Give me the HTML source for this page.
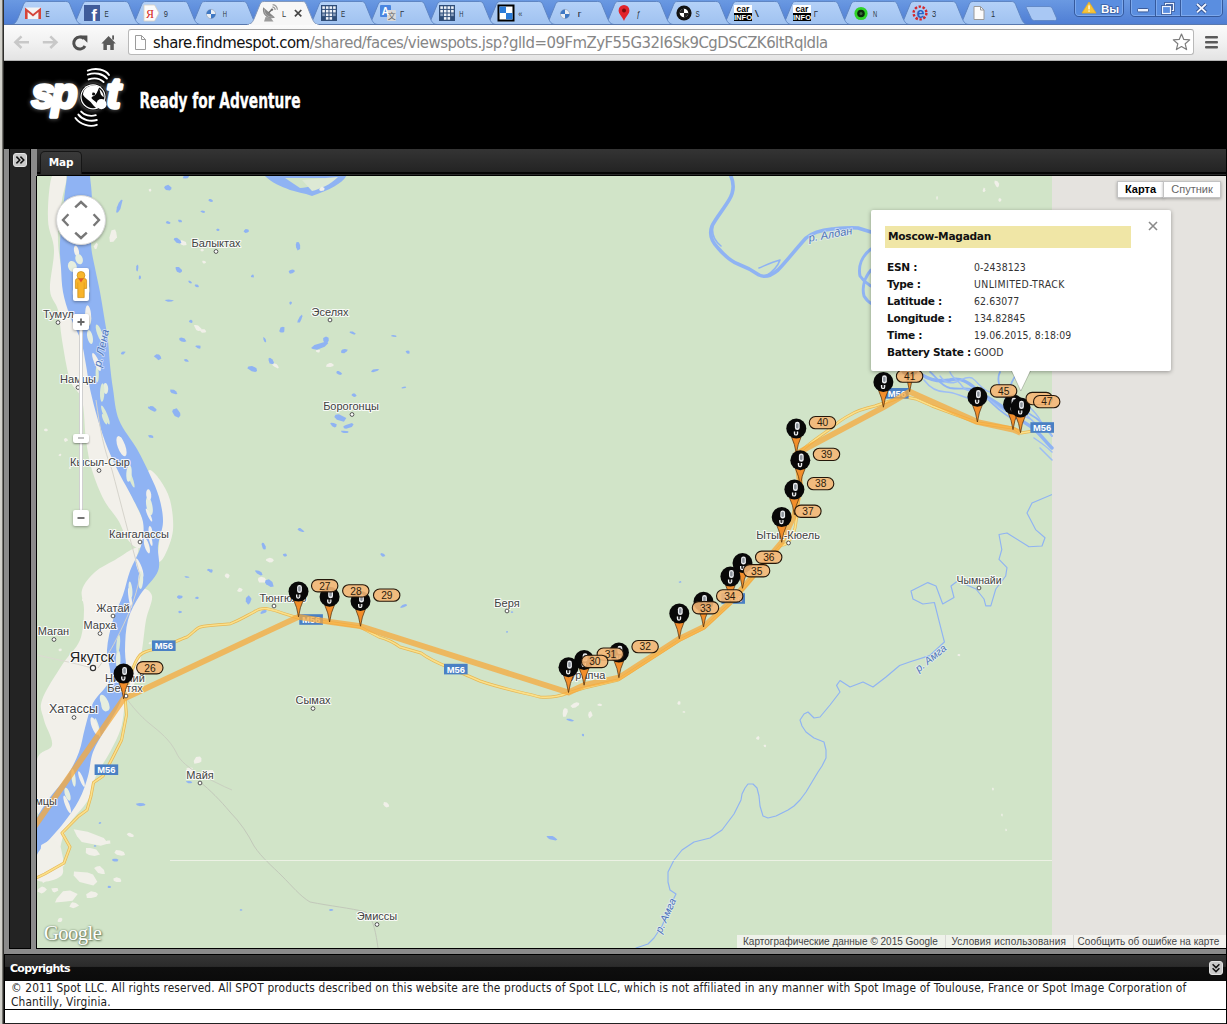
<!DOCTYPE html>
<html lang="ru">
<head>
<meta charset="utf-8">
<title>SPOT Shared Page</title>
<style>
html,body{margin:0;padding:0;}
body{width:1227px;height:1024px;overflow:hidden;position:relative;background:#000;font-family:"Liberation Sans","DejaVu Sans",sans-serif;}
.abs{position:absolute;}
#winl{left:0;top:0;width:3px;height:1024px;background:linear-gradient(90deg,#d4d3cd 0,#d0cfc9 66%,#75746f 67%,#75746f 100%);}
#winl2{left:3px;top:0;width:1px;height:1024px;background:#2e2e2c;}
/* ---------- browser chrome ---------- */
#tabstrip{left:4px;top:0;width:1223px;height:24px;background:linear-gradient(#6a99e2,#4f7ed4);}
#toolbar{left:4px;top:24px;width:1223px;height:37px;background:linear-gradient(#fbfbfb 0%,#f1f1f1 50%,#e3e3e3 100%);border-top:1px solid #5d7eb5;box-sizing:border-box;}
#toolbar .line{left:0;bottom:0;width:100%;height:1px;background:#b4b4b4;}
#urlbox{left:128px;top:29px;width:1066px;height:26px;box-sizing:border-box;background:#fff;border:1px solid #b9b9b9;border-top-color:#a3a3a3;border-radius:3px;}
#url{left:153px;top:32px;height:22px;line-height:22px;font-size:16.6px;color:#868686;white-space:nowrap;font-family:"DejaVu Sans Condensed","Liberation Sans",sans-serif;letter-spacing:-0.52px;}
#url b{font-weight:normal;color:#111;}
/* ---------- page ---------- */
#hdr{left:4px;top:61px;width:1223px;height:88px;background:#000;}
#frame{left:4px;top:149px;width:1223px;height:805px;background:#8b8b8b;}
#side{left:9px;top:149px;width:22px;height:800px;background:#232323;border:1px solid #000;border-top:none;box-sizing:border-box;}
#mapborder{left:36px;top:176px;width:1191px;height:773px;background:#000;}
#sidebtn{left:13px;top:153px;width:14px;height:14px;border-radius:3px;background:#c9c9c9;border:1px solid #e2e2e2;box-sizing:border-box;}
#tabbar{left:37px;top:149px;width:1190px;height:27px;background:linear-gradient(#343434 0,#232323 86%,#050505 87%,#050505 92%,#2a2a2a 93%,#2a2a2a 97%,#000 98%);}
#maptab{left:40px;top:151px;width:42px;height:23px;background:linear-gradient(#3a3a3a,#2d2d2d);border-radius:5px 5px 0 0;border:1px solid #161616;border-bottom:none;box-sizing:border-box;color:#fff;font:bold 10.5px/21px "DejaVu Sans","Liberation Sans",sans-serif;text-align:center;letter-spacing:-0.2px;}
#map{left:37px;top:176px;width:1189px;height:772px;background:#e5e3df;overflow:hidden;}
#map svg{position:absolute;left:0;top:0;}
/* copyright */
#cbar{left:4px;top:954px;width:1223px;height:27px;background:linear-gradient(#000 0,#000 4%,#353535 5%,#2b2b2b 46%,#0e0e0e 50%,#0b0b0b 100%);border-left:1px solid #000;box-sizing:border-box;}
#cbar span{position:absolute;left:5px;top:7.5px;color:#fff;font:bold 11px/14px "DejaVu Sans","Liberation Sans",sans-serif;letter-spacing:-0.75px;}
#cpanel{left:4px;top:981px;width:1223px;height:29px;background:#fff;border-left:1px solid #000;border-bottom:1px solid #000;box-sizing:border-box;}
#ctext{left:11px;top:981px;width:1200px;font-size:11.8px;letter-spacing:0.15px;line-height:14px;color:#222;font-family:"DejaVu Sans Condensed","Liberation Sans",sans-serif;white-space:nowrap;}
#cbot{left:4px;top:1010px;width:1223px;height:13px;background:#fff;border-left:1px solid #000;box-sizing:border-box;}
#cbot2{left:4px;top:1023px;width:1223px;height:1px;background:#222;}
#cbtn{left:1209px;top:961px;width:14px;height:14px;border-radius:3px;background:#c9c9c9;border:1px solid #e2e2e2;box-sizing:border-box;}
.iwl{left:887px;font:bold 10.6px/14px "DejaVu Sans","Liberation Sans",sans-serif;color:#111;letter-spacing:-0.3px;white-space:nowrap;}
.iwv{left:974px;font:10.4px/14px "DejaVu Sans Condensed","Liberation Sans",sans-serif;color:#333;white-space:nowrap;letter-spacing:0.1px;}
</style>
</head>
<body>
<div id="winr" class="abs" style="left:1226px;top:61px;width:1px;height:963px;background:#000;z-index:50;"></div>
<div id="winl" class="abs"></div><div id="winl2" class="abs"></div>
<!--CHROME-->
<div id="tabstrip" class="abs"></div>
<div id="toolbar" class="abs"><div class="line abs"></div></div>
<div id="urlbox" class="abs"></div>
<div id="url" class="abs"><b>share.findmespot.com</b>/shared/faces/viewspots.jsp?glId=09FmZyF55G32I6Sk9CgDSCZK6ltRqldla</div>
<svg class="abs" style="left:0;top:0" width="1227" height="25" viewBox="0 0 1227 25">
<defs><linearGradient id="tg" x1="0" y1="0" x2="0" y2="1"><stop offset="0" stop-color="#b4d1f8"/><stop offset="1" stop-color="#a0c2f0"/></linearGradient></defs>
<path d="M956.6 24.5 C960.6 24.5 962.1 21.5 963.6 18 L969.1 4.5 C970.1 2 971.1 1.5 973.6 1.5 L1011.1 1.5 C1013.6 1.5 1014.6 2 1015.6 4.5 L1021.1 18 C1022.6 21.5 1024.1 24.5 1028.1 24.5 Z" fill="url(#tg)" stroke="#5f86c4" stroke-width="1"/>
<path d="M897.5 24.5 C901.5 24.5 903.0 21.5 904.5 18 L910.0 4.5 C911.0 2 912.0 1.5 914.5 1.5 L952.0 1.5 C954.5 1.5 955.5 2 956.5 4.5 L962.0 18 C963.5 21.5 965.0 24.5 969.0 24.5 Z" fill="url(#tg)" stroke="#5f86c4" stroke-width="1"/>
<path d="M838.4 24.5 C842.4 24.5 843.9 21.5 845.4 18 L850.9 4.5 C851.9 2 852.9 1.5 855.4 1.5 L892.9 1.5 C895.4 1.5 896.4 2 897.4 4.5 L902.9 18 C904.4 21.5 905.9 24.5 909.9 24.5 Z" fill="url(#tg)" stroke="#5f86c4" stroke-width="1"/>
<path d="M779.3 24.5 C783.3 24.5 784.8 21.5 786.3 18 L791.8 4.5 C792.8 2 793.8 1.5 796.3 1.5 L833.8 1.5 C836.3 1.5 837.3 2 838.3 4.5 L843.8 18 C845.3 21.5 846.8 24.5 850.8 24.5 Z" fill="url(#tg)" stroke="#5f86c4" stroke-width="1"/>
<path d="M720.2 24.5 C724.2 24.5 725.7 21.5 727.2 18 L732.7 4.5 C733.7 2 734.7 1.5 737.2 1.5 L774.7 1.5 C777.2 1.5 778.2 2 779.2 4.5 L784.7 18 C786.2 21.5 787.7 24.5 791.7 24.5 Z" fill="url(#tg)" stroke="#5f86c4" stroke-width="1"/>
<path d="M661.1 24.5 C665.1 24.5 666.6 21.5 668.1 18 L673.6 4.5 C674.6 2 675.6 1.5 678.1 1.5 L715.6 1.5 C718.1 1.5 719.1 2 720.1 4.5 L725.6 18 C727.1 21.5 728.6 24.5 732.6 24.5 Z" fill="url(#tg)" stroke="#5f86c4" stroke-width="1"/>
<path d="M602.0 24.5 C606.0 24.5 607.5 21.5 609.0 18 L614.5 4.5 C615.5 2 616.5 1.5 619.0 1.5 L656.5 1.5 C659.0 1.5 660.0 2 661.0 4.5 L666.5 18 C668.0 21.5 669.5 24.5 673.5 24.5 Z" fill="url(#tg)" stroke="#5f86c4" stroke-width="1"/>
<path d="M542.9 24.5 C546.9 24.5 548.4 21.5 549.9 18 L555.4 4.5 C556.4 2 557.4 1.5 559.9 1.5 L597.4 1.5 C599.9 1.5 600.9 2 601.9 4.5 L607.4 18 C608.9 21.5 610.4 24.5 614.4 24.5 Z" fill="url(#tg)" stroke="#5f86c4" stroke-width="1"/>
<path d="M483.8 24.5 C487.8 24.5 489.3 21.5 490.8 18 L496.3 4.5 C497.3 2 498.3 1.5 500.8 1.5 L538.3 1.5 C540.8 1.5 541.8 2 542.8 4.5 L548.3 18 C549.8 21.5 551.3 24.5 555.3 24.5 Z" fill="url(#tg)" stroke="#5f86c4" stroke-width="1"/>
<path d="M424.7 24.5 C428.7 24.5 430.2 21.5 431.7 18 L437.2 4.5 C438.2 2 439.2 1.5 441.7 1.5 L479.2 1.5 C481.7 1.5 482.7 2 483.7 4.5 L489.2 18 C490.7 21.5 492.2 24.5 496.2 24.5 Z" fill="url(#tg)" stroke="#5f86c4" stroke-width="1"/>
<path d="M365.6 24.5 C369.6 24.5 371.1 21.5 372.6 18 L378.1 4.5 C379.1 2 380.1 1.5 382.6 1.5 L420.1 1.5 C422.6 1.5 423.6 2 424.6 4.5 L430.1 18 C431.6 21.5 433.1 24.5 437.1 24.5 Z" fill="url(#tg)" stroke="#5f86c4" stroke-width="1"/>
<path d="M306.5 24.5 C310.5 24.5 312.0 21.5 313.5 18 L319.0 4.5 C320.0 2 321.0 1.5 323.5 1.5 L361.0 1.5 C363.5 1.5 364.5 2 365.5 4.5 L371.0 18 C372.5 21.5 374.0 24.5 378.0 24.5 Z" fill="url(#tg)" stroke="#5f86c4" stroke-width="1"/>
<path d="M188.3 24.5 C192.3 24.5 193.8 21.5 195.3 18 L200.8 4.5 C201.8 2 202.8 1.5 205.3 1.5 L242.8 1.5 C245.3 1.5 246.3 2 247.3 4.5 L252.8 18 C254.3 21.5 255.8 24.5 259.8 24.5 Z" fill="url(#tg)" stroke="#5f86c4" stroke-width="1"/>
<path d="M129.2 24.5 C133.2 24.5 134.7 21.5 136.2 18 L141.7 4.5 C142.7 2 143.7 1.5 146.2 1.5 L183.7 1.5 C186.2 1.5 187.2 2 188.2 4.5 L193.7 18 C195.2 21.5 196.7 24.5 200.7 24.5 Z" fill="url(#tg)" stroke="#5f86c4" stroke-width="1"/>
<path d="M70.1 24.5 C74.1 24.5 75.6 21.5 77.1 18 L82.6 4.5 C83.6 2 84.6 1.5 87.1 1.5 L124.6 1.5 C127.1 1.5 128.1 2 129.1 4.5 L134.6 18 C136.1 21.5 137.6 24.5 141.6 24.5 Z" fill="url(#tg)" stroke="#5f86c4" stroke-width="1"/>
<path d="M11.0 24.5 C15.0 24.5 16.5 21.5 18.0 18 L23.5 4.5 C24.5 2 25.5 1.5 28.0 1.5 L65.5 1.5 C68.0 1.5 69.0 2 70.0 4.5 L75.5 18 C77.0 21.5 78.5 24.5 82.5 24.5 Z" fill="url(#tg)" stroke="#5f86c4" stroke-width="1"/>
<path d="M1027 6.5 H1049 C1051 6.5 1052 7.5 1052.6 9 L1056.5 18 C1057 19.6 1056.4 20.5 1054.6 20.5 H1034.5 C1032.5 20.5 1031.6 19.6 1031 18 L1026.6 8.6 C1026 7.2 1026.2 6.5 1027 6.5 Z" fill="#a9c8f4" stroke="#5f86c4" stroke-width="0.9"/>
<rect x="4" y="24" width="1223" height="1" fill="#5878ae"/>
<path d="M247.4 24.5 C251.4 24.5 252.9 21.5 254.4 18 L259.9 4.5 C260.9 2 261.9 1.5 264.4 1.5 L301.9 1.5 C304.4 1.5 305.4 2 306.4 4.5 L311.9 18 C313.4 21.5 314.9 24.5 318.9 24.5 Z" fill="#f7f7f7" stroke="#8298bc" stroke-width="1"/>
<rect x="248.9" y="24" width="68.5" height="1.2" fill="#f7f7f7"/>
<rect x="25" y="7.5" width="16" height="11.5" fill="#f4f4f4"/><path d="M25 19 V7.5 L33 14 L41 7.5 V19 H38.4 V12 L33 16.6 L27.6 12 V19 Z" fill="#d5453a"/>
<text x="45.5" y="16.6" font-size="9.6" fill="#1a1f2a" fill-opacity="0.92" font-family="Liberation Sans, sans-serif" textLength="4.2" lengthAdjust="spacingAndGlyphs">Е</text>
<rect x="84" y="5" width="16" height="16" fill="#3f5c9a"/><text x="94.2" y="21" text-anchor="middle" font-size="17" font-weight="bold" fill="#fff" font-family="Liberation Sans, sans-serif">f</text>
<text x="104.6" y="16.6" font-size="9.6" fill="#1a1f2a" fill-opacity="0.92" font-family="Liberation Sans, sans-serif" textLength="4.2" lengthAdjust="spacingAndGlyphs">Е</text>
<path d="M144 5 H154.5 L159 13 L154.5 21 H144 Z" fill="#fbfbfb" stroke="#d9d2c4" stroke-width="0.8"/><text x="150" y="17.6" text-anchor="middle" font-size="12" fill="#d6261c" font-family="Liberation Serif, serif">Я</text>
<text x="163.7" y="16.6" font-size="9.6" fill="#1a1f2a" fill-opacity="0.92" font-family="Liberation Sans, sans-serif" textLength="4.2" lengthAdjust="spacingAndGlyphs">9</text>
<circle cx="211" cy="14" r="4.6" fill="#e9eef5" stroke="#9aa9c0" stroke-width="0.8"/><path d="M211 14 V9.4 A4.6 4.6 0 0 0 206.4 14 Z M211 14 V18.6 A4.6 4.6 0 0 0 215.6 14 Z" fill="#3f78c4"/>
<text x="222.8" y="16.6" font-size="9.6" fill="#1a1f2a" fill-opacity="0.92" font-family="Liberation Sans, sans-serif" textLength="4.2" lengthAdjust="spacingAndGlyphs">Н</text>
<path d="M265.5 17 L264 21.6 H273.5 L270.5 17.5 Z" fill="#9c9c9c"/><path d="M263.2 7.2 C261.4 14.5 267.5 20 275 17.6 Z" fill="#878787"/><path d="M264.6 9.5 C264 14 268 17.6 272.6 17" fill="none" stroke="#b4b4b4" stroke-width="0.9"/><path d="M268.6 12.8 L271.8 9.8" stroke="#6f6f6f" stroke-width="1.5"/><circle cx="272" cy="9.6" r="1.2" fill="#6f6f6f"/><path d="M272.4 6.9 A3.4 3.4 0 0 1 275.2 10 M272.6 4.7 A5.6 5.6 0 0 1 277.4 9.8" fill="none" stroke="#9a9a9a" stroke-width="1.2"/>
<text x="281.9" y="16.6" font-size="9.6" fill="#1a1f2a" fill-opacity="0.92" font-family="Liberation Sans, sans-serif" textLength="4.2" lengthAdjust="spacingAndGlyphs">L</text>
<rect x="321" y="5" width="16" height="16" fill="#2f4d78"/><rect x="322.3" y="6.3" width="2.6" height="2.6" fill="#eef2f8"/><rect x="325.9" y="6.3" width="2.6" height="2.6" fill="#eef2f8"/><rect x="329.5" y="6.3" width="2.6" height="2.6" fill="#eef2f8"/><rect x="333.1" y="6.3" width="2.6" height="2.6" fill="#eef2f8"/><rect x="322.3" y="9.9" width="2.6" height="2.6" fill="#eef2f8"/><rect x="325.9" y="9.9" width="2.6" height="2.6" fill="#eef2f8"/><rect x="329.5" y="9.9" width="2.6" height="2.6" fill="#eef2f8"/><rect x="333.1" y="9.9" width="2.6" height="2.6" fill="#eef2f8"/><rect x="322.3" y="13.5" width="2.6" height="2.6" fill="#8aa0bf"/><rect x="325.9" y="13.5" width="2.6" height="2.6" fill="#eef2f8"/><rect x="329.5" y="13.5" width="2.6" height="2.6" fill="#eef2f8"/><rect x="333.1" y="13.5" width="2.6" height="2.6" fill="#8aa0bf"/><rect x="325.9" y="17.1" width="2.6" height="2.6" fill="#eef2f8"/><rect x="329.5" y="17.1" width="2.6" height="2.6" fill="#eef2f8"/>
<text x="341.0" y="16.6" font-size="9.6" fill="#1a1f2a" fill-opacity="0.92" font-family="Liberation Sans, sans-serif" textLength="4.2" lengthAdjust="spacingAndGlyphs">Е</text>
<rect x="380" y="5" width="11" height="12" rx="1" fill="#4a86e0"/><rect x="387" y="10" width="9" height="11" rx="1" fill="#d8d8d8"/><text x="385.3" y="15" text-anchor="middle" font-size="10" font-weight="bold" fill="#fff" font-family="Liberation Sans, sans-serif">A</text><text x="391.8" y="19.4" text-anchor="middle" font-size="8" fill="#666" font-family="Liberation Sans, Noto Sans CJK SC, sans-serif">文</text>
<text x="400.1" y="16.6" font-size="9.6" fill="#1a1f2a" fill-opacity="0.92" font-family="Liberation Sans, sans-serif" textLength="4.2" lengthAdjust="spacingAndGlyphs">Г</text>
<rect x="439" y="5" width="16" height="16" fill="#2f4d78"/><rect x="440.3" y="6.3" width="2.6" height="2.6" fill="#eef2f8"/><rect x="443.9" y="6.3" width="2.6" height="2.6" fill="#eef2f8"/><rect x="447.5" y="6.3" width="2.6" height="2.6" fill="#eef2f8"/><rect x="451.1" y="6.3" width="2.6" height="2.6" fill="#eef2f8"/><rect x="440.3" y="9.9" width="2.6" height="2.6" fill="#eef2f8"/><rect x="443.9" y="9.9" width="2.6" height="2.6" fill="#eef2f8"/><rect x="447.5" y="9.9" width="2.6" height="2.6" fill="#eef2f8"/><rect x="451.1" y="9.9" width="2.6" height="2.6" fill="#eef2f8"/><rect x="440.3" y="13.5" width="2.6" height="2.6" fill="#8aa0bf"/><rect x="443.9" y="13.5" width="2.6" height="2.6" fill="#eef2f8"/><rect x="447.5" y="13.5" width="2.6" height="2.6" fill="#eef2f8"/><rect x="451.1" y="13.5" width="2.6" height="2.6" fill="#8aa0bf"/><rect x="443.9" y="17.1" width="2.6" height="2.6" fill="#eef2f8"/><rect x="447.5" y="17.1" width="2.6" height="2.6" fill="#eef2f8"/>
<text x="459.2" y="16.6" font-size="9.6" fill="#1a1f2a" fill-opacity="0.92" font-family="Liberation Sans, sans-serif" textLength="4.2" lengthAdjust="spacingAndGlyphs">Н</text>
<rect x="498.5" y="5.5" width="15" height="15" fill="#fff" stroke="#000" stroke-width="2"/><rect x="499.5" y="6.5" width="6.5" height="6.5" fill="#2a7bd8"/><rect x="506" y="13" width="6.5" height="6.5" fill="#2a7bd8"/>
<text x="518.3" y="16.6" font-size="9.6" fill="#1a1f2a" fill-opacity="0.92" font-family="Liberation Sans, sans-serif" textLength="4.2" lengthAdjust="spacingAndGlyphs">«</text>
<circle cx="565" cy="14" r="4.6" fill="#e9eef5" stroke="#9aa9c0" stroke-width="0.8"/><path d="M565 14 V9.4 A4.6 4.6 0 0 0 560.4 14 Z M565 14 V18.6 A4.6 4.6 0 0 0 569.6 14 Z" fill="#3f78c4"/>
<text x="577.4" y="16.6" font-size="9.6" fill="#1a1f2a" fill-opacity="0.92" font-family="Liberation Sans, sans-serif" textLength="4.2" lengthAdjust="spacingAndGlyphs">г</text>
<path d="M624 21 C622 16 618.6 14 618.6 10.4 A5.4 5.4 0 0 1 629.4 10.4 C629.4 14 626 16 624 21 Z" fill="#e1232b"/><circle cx="624" cy="10.4" r="2" fill="#7a0d10"/>
<text x="636.5" y="16.6" font-size="9.6" fill="#1a1f2a" fill-opacity="0.92" font-family="Liberation Sans, sans-serif" textLength="4.2" lengthAdjust="spacingAndGlyphs">ƒ</text>
<circle cx="684" cy="13" r="7.6" fill="#111"/><circle cx="684" cy="13" r="4.3" fill="#fff"/><path d="M684 13 V8.7 A4.3 4.3 0 0 0 679.7 13 Z M684 13 V17.3 A4.3 4.3 0 0 0 688.3 13 Z" fill="#222"/>
<text x="695.6" y="16.6" font-size="9.6" fill="#1a1f2a" fill-opacity="0.92" font-family="Liberation Sans, sans-serif" textLength="4.2" lengthAdjust="spacingAndGlyphs">S</text>
<rect x="734" y="5" width="18" height="8" fill="#fff"/><rect x="734" y="13" width="18" height="8" fill="#000"/><text x="743" y="11.6" text-anchor="middle" font-size="8.5" font-weight="bold" fill="#000" font-family="Liberation Sans, sans-serif">car</text><text x="743" y="20" text-anchor="middle" font-size="7.6" font-weight="bold" fill="#fff" font-family="Liberation Sans, sans-serif">INFO</text>
<text x="754.7" y="16.6" font-size="9.6" fill="#1a1f2a" fill-opacity="0.92" font-family="Liberation Sans, sans-serif" textLength="4.2" lengthAdjust="spacingAndGlyphs">\</text>
<rect x="793" y="5" width="18" height="8" fill="#fff"/><rect x="793" y="13" width="18" height="8" fill="#000"/><text x="802" y="11.6" text-anchor="middle" font-size="8.5" font-weight="bold" fill="#000" font-family="Liberation Sans, sans-serif">car</text><text x="802" y="20" text-anchor="middle" font-size="7.6" font-weight="bold" fill="#fff" font-family="Liberation Sans, sans-serif">INFO</text>
<text x="813.8" y="16.6" font-size="9.6" fill="#1a1f2a" fill-opacity="0.92" font-family="Liberation Sans, sans-serif" textLength="4.2" lengthAdjust="spacingAndGlyphs">Г</text>
<circle cx="861" cy="13.5" r="6.6" fill="#2fd328"/><circle cx="861" cy="13.5" r="3.8" fill="#0b2a0a"/><circle cx="861" cy="13.5" r="1.5" fill="#3a6a38"/>
<text x="872.9" y="16.6" font-size="9.6" fill="#1a1f2a" fill-opacity="0.92" font-family="Liberation Sans, sans-serif" textLength="4.2" lengthAdjust="spacingAndGlyphs">N</text>
<circle cx="920" cy="13" r="6.4" fill="none" stroke="#d4282c" stroke-width="2.4" stroke-dasharray="2.4 1.6"/><text x="920.4" y="18" text-anchor="middle" font-size="14" font-weight="bold" fill="#2a62c4" font-family="Liberation Sans, sans-serif">e</text>
<text x="932.0" y="16.6" font-size="9.6" fill="#1a1f2a" fill-opacity="0.92" font-family="Liberation Sans, sans-serif" textLength="4.2" lengthAdjust="spacingAndGlyphs">З</text>
<path d="M974 6.5 H980.5 L984 10 V19.5 H974 Z" fill="#fbfbfb" stroke="#9a9a9a" stroke-width="1"/><path d="M980.5 6.5 V10 H984" fill="none" stroke="#9a9a9a" stroke-width="1"/>
<text x="991.1" y="16.6" font-size="9.6" fill="#1a1f2a" fill-opacity="0.92" font-family="Liberation Sans, sans-serif" textLength="4.2" lengthAdjust="spacingAndGlyphs">1</text>
<path d="M294.9 10 l6.4 6.4 m0 -6.4 l-6.4 6.4" stroke="#444" stroke-width="1.7" fill="none"/>
<path d="M1074.5 -1 V12 C1074.5 15 1076 16.5 1079 16.5 H1119 C1122 16.5 1123.5 15 1123.5 12 V-1" fill="#5a8ee0" stroke="#35599c" stroke-width="1"/>
<path d="M1075.5 -1 V12 C1075.5 14.5 1077 15.5 1079 15.5 H1119 C1121 15.5 1122.5 14.5 1122.5 12 V-1" fill="none" stroke="#86b0f0" stroke-width="0.8"/>
<path d="M1089 2 L1096 13 H1082 Z" fill="#f7c43a" stroke="#e8ae20" stroke-width="0.8" stroke-linejoin="round"/><rect x="1088.4" y="5.4" width="1.3" height="4" fill="#fff"/><rect x="1088.4" y="10.4" width="1.3" height="1.3" fill="#fff"/>
<text x="1101" y="12.6" font-size="11.5" font-weight="bold" fill="#fff" stroke="#2c4a85" stroke-width="1.6" stroke-opacity="0.7" paint-order="stroke" font-family="Liberation Sans, sans-serif">Вы</text>
<path d="M1130.5 -1 V12 C1130.5 15 1132 16.5 1135 16.5 H1218 C1221 16.5 1222.5 15 1222.5 12 V-1" fill="#5a8ee0" stroke="#35599c" stroke-width="1"/>
<path d="M1131.5 -1 V12 C1131.5 14.5 1133 15.5 1135 15.5 H1218 C1220 15.5 1221.5 14.5 1221.5 12 V-1" fill="none" stroke="#86b0f0" stroke-width="0.8"/>
<path d="M1155.5 0 V16 M1180.5 0 V16" stroke="#35599c" stroke-width="1"/><path d="M1156.5 0 V15.5 M1181.5 0 V15.5" stroke="#86b0f0" stroke-width="0.8"/>
<rect x="1137.5" y="8.5" width="11" height="3.4" rx="1" fill="#eef4ff" stroke="#2f4f8f" stroke-width="0.9"/>
<rect x="1165.5" y="3.5" width="8" height="7" fill="none" stroke="#2f4f8f" stroke-width="2.6"/><rect x="1165.5" y="3.5" width="8" height="7" fill="none" stroke="#eef4ff" stroke-width="1.2"/>
<rect x="1162.5" y="6.5" width="8" height="7" fill="#5a8ee0" stroke="#2f4f8f" stroke-width="2.6"/><rect x="1162.5" y="6.5" width="8" height="7" fill="#5a8ee0" stroke="#eef4ff" stroke-width="1.2"/>
<path d="M1197 4 l9 8.4 m0 -8.4 l-9 8.4" stroke="#2f4f8f" stroke-width="3.6" fill="none"/><path d="M1197 4 l9 8.4 m0 -8.4 l-9 8.4" stroke="#f2f6ff" stroke-width="1.9" fill="none"/>
</svg>
<svg class="abs" style="left:0;top:25px" width="1227" height="36" viewBox="0 25 1227 36">
<path d="M15 42.2 H29 M21.5 36.4 L15.4 42.2 L21.5 48" fill="none" stroke="#c8c8c8" stroke-width="2.6" stroke-linejoin="miter"/>
<path d="M42.8 42.2 H56.8 M50.3 36.4 L56.4 42.2 L50.3 48" fill="none" stroke="#c8c8c8" stroke-width="2.6"/>
<path d="M84 38.8 A6 6 0 1 0 85 46" fill="none" stroke="#4f4f4f" stroke-width="3"/><path d="M80 35.4 H87.4 V42.8 Z" fill="#4f4f4f"/>
<path d="M101.4 43.4 L108.6 36 L115.8 43.4 H113.8 V50 H110.3 V45 H106.9 V50 H103.4 V43.4 Z" fill="#5a5a5a"/><rect x="112.2" y="35.4" width="1.8" height="4.2" fill="#5a5a5a"/>
<path d="M135.5 35.5 H141.5 L145.5 39.5 V49.5 H135.5 Z" fill="#fdfdfd" stroke="#9b9b9b" stroke-width="1"/><path d="M141.5 35.5 V39.5 H145.5" fill="none" stroke="#9b9b9b" stroke-width="1"/>
<polygon points="1181.5,34.0 1183.8,39.4 1189.7,39.9 1185.2,43.8 1186.6,49.6 1181.5,46.5 1176.4,49.6 1177.8,43.8 1173.3,39.9 1179.2,39.4" fill="#fff" stroke="#7c7c7c" stroke-width="1.2" stroke-linejoin="round"/>
<rect x="1205" y="36" width="13" height="2.6" rx="1" fill="#5a5a5a"/><rect x="1205" y="41" width="13" height="2.6" rx="1" fill="#5a5a5a"/><rect x="1205" y="46" width="13" height="2.6" rx="1" fill="#5a5a5a"/>
</svg>
<!--/CHROME-->
<div id="hdr" class="abs"></div>
<svg class="abs" style="left:4px;top:61px" width="330" height="88" viewBox="4 61 330 88">
<defs><filter id="glow" x="-20%" y="-30%" width="140%" height="160%"><feGaussianBlur stdDeviation="2"/></filter></defs>
<g filter="url(#glow)" opacity="0.36" fill="#fff" stroke="#fff" stroke-linejoin="round">
<text x="31.5" y="108.2" font-size="42" font-weight="bold" font-style="italic" font-family="Liberation Sans, sans-serif" stroke-width="4.4" letter-spacing="-3.2">sp</text>
<text x="106.5" y="108.2" font-size="42" font-weight="bold" font-style="italic" font-family="Liberation Sans, sans-serif" stroke-width="4.4">t</text>
<circle cx="93" cy="96.8" r="14"/>
</g>
<g fill="#fff" stroke="#fff" stroke-linejoin="round">
<text x="31.5" y="108.2" font-size="42" font-weight="bold" font-style="italic" font-family="Liberation Sans, sans-serif" stroke-width="3.4" letter-spacing="-3.2">sp</text>
<text x="106.5" y="108.2" font-size="42" font-weight="bold" font-style="italic" font-family="Liberation Sans, sans-serif" stroke-width="3.4">t</text>
</g>
<circle cx="93" cy="96.8" r="13.4" fill="#000"/>
<circle cx="93" cy="96.8" r="12.6" fill="#fff"/>
<circle cx="93" cy="96.8" r="11.4" fill="#0a0a0a"/>
<path d="M85.6 88.4 C89 85 95.4 84.6 99.4 87 C98 89.8 97.4 92.4 95.6 94.6 C94.4 96.6 92 96 91.4 98 C92.8 100.2 96 101 97 103.6 C97.6 106 98.4 108 96.8 108.8 C94.4 106.8 92.4 104.4 90.6 102 C88 99.4 84.4 98 83 94.8 C83 92.2 84 90 85.6 88.4 Z" fill="#fff"/>
<path d="M92.6 92.6 C94.2 92 95.6 93 95 94.6 C94.2 96 92.6 95.6 92 94.6 Z" fill="#0a0a0a"/>
<path d="M99.4 89 C102 91 103.6 94 103.8 97 C102.4 96.6 100.8 95 100.4 93 Z" fill="#fff"/>
<circle cx="101.4" cy="104.2" r="5.1" fill="#fff"/>
<g fill="none" stroke="#fff" stroke-width="1.9" stroke-linecap="round">
<path d="M88.6 79.4 C94 77.6 100 78.6 103.6 82"/>
<path d="M87.8 74.6 C95 72 103 73.6 107 78.6"/>
<path d="M87.8 70.6 C96 67.4 105.4 69.4 109 75"/>
<path d="M81.2 111.6 C84.4 115.4 90.4 116.8 95.8 115.2"/>
<path d="M78.4 114.6 C82.4 120 90.4 122 96.8 120"/>
<path d="M75.4 118 C80.4 124.8 90 127.4 96.8 124.8"/>
</g>
<text x="139.5" y="108.4" font-size="21.5" font-weight="bold" fill="#fff" font-family="DejaVu Sans Condensed, Liberation Sans, sans-serif" stroke="#fff" stroke-width="0.35" textLength="161" lengthAdjust="spacingAndGlyphs">Ready for Adventure</text>
</svg>

<div id="frame" class="abs"></div>
<div id="side" class="abs"></div>
<div id="sidebtn" class="abs"></div>
<svg class="abs" style="left:13px;top:153px" width="14" height="14" viewBox="0 0 14 14"><path d="M3.4 3.6 L6.8 7 L3.4 10.4 M7.4 3.6 L10.8 7 L7.4 10.4" fill="none" stroke="#111" stroke-width="1.5"/></svg>
<div id="tabbar" class="abs"></div>
<div id="maptab" class="abs">Map</div>
<div id="mapborder" class="abs"></div>
<div id="map" class="abs">
<svg width="1189" height="772" viewBox="37 176 1189 772">
<rect x="37" y="176" width="1015" height="772" fill="#d1e4c8"/>
<path d="M52.0 176.0C55.0 168.7 64.3 172.0 66.0 176.0C67.7 180.0 63.3 191.0 62.0 200.0C60.7 209.0 58.3 220.0 58.0 230.0C57.7 240.0 58.0 248.3 60.0 260.0C62.0 271.7 66.0 286.7 70.0 300.0C74.0 313.3 80.3 326.7 84.0 340.0C87.7 353.3 89.3 366.7 92.0 380.0C94.7 393.3 96.7 408.3 100.0 420.0C103.3 431.7 108.0 440.0 112.0 450.0C116.0 460.0 120.0 470.8 124.0 480.0C128.0 489.2 132.3 496.7 136.0 505.0C139.7 513.3 145.3 522.8 146.0 530.0C146.7 537.2 143.0 546.3 140.0 548.0C137.0 549.7 131.7 544.7 128.0 540.0C124.3 535.3 122.0 526.7 118.0 520.0C114.0 513.3 108.3 508.3 104.0 500.0C99.7 491.7 95.0 480.0 92.0 470.0C89.0 460.0 87.7 451.7 86.0 440.0C84.3 428.3 84.7 410.0 82.0 400.0C79.3 390.0 73.3 390.0 70.0 380.0C66.7 370.0 64.0 351.7 62.0 340.0C60.0 328.3 60.0 318.3 58.0 310.0C56.0 301.7 50.7 300.0 50.0 290.0C49.3 280.0 54.3 261.7 54.0 250.0C53.7 238.3 48.3 232.3 48.0 220.0C47.7 207.7 49.0 183.3 52.0 176.0Z" fill="#f2f0ea"/>
<path d="M150.0 470.0C152.0 470.3 156.7 475.0 160.0 480.0C163.3 485.0 167.8 491.7 170.0 500.0C172.2 508.3 173.8 520.8 173.0 530.0C172.2 539.2 167.5 550.0 165.0 555.0C162.5 560.0 158.8 564.2 158.0 560.0C157.2 555.8 160.0 540.0 160.0 530.0C160.0 520.0 160.0 508.7 158.0 500.0C156.0 491.3 149.3 483.0 148.0 478.0C146.7 473.0 148.0 469.7 150.0 470.0Z" fill="#f2f0ea"/>
<path d="M138.0 548.0C140.5 550.5 132.3 566.3 130.0 575.0C127.7 583.7 126.5 591.7 124.0 600.0C121.5 608.3 117.7 615.8 115.0 625.0C112.3 634.2 108.5 645.8 108.0 655.0C107.5 664.2 114.0 671.7 112.0 680.0C110.0 688.3 100.3 696.7 96.0 705.0C91.7 713.3 88.7 722.2 86.0 730.0C83.3 737.8 83.0 744.3 80.0 752.0C77.0 759.7 73.0 768.0 68.0 776.0C63.0 784.0 55.2 794.0 50.0 800.0C44.8 806.0 39.2 818.7 37.0 812.0C34.8 805.3 34.5 771.2 37.0 760.0C39.5 748.8 50.8 751.7 52.0 745.0C53.2 738.3 45.7 727.5 44.0 720.0C42.3 712.5 39.0 709.2 42.0 700.0C45.0 690.8 55.7 675.0 62.0 665.0C68.3 655.0 76.3 649.2 80.0 640.0C83.7 630.8 83.7 618.3 84.0 610.0C84.3 601.7 80.2 596.3 82.0 590.0C83.8 583.7 89.5 577.0 95.0 572.0C100.5 567.0 107.8 564.0 115.0 560.0C122.2 556.0 135.5 545.5 138.0 548.0Z" fill="#f2f0ea"/>
<path d="M140.0 590.0C144.2 586.0 151.0 591.0 152.0 596.0C153.0 601.0 147.7 611.0 146.0 620.0C144.3 629.0 143.7 640.0 142.0 650.0C140.3 660.0 138.7 671.7 136.0 680.0C133.3 688.3 128.5 692.0 126.0 700.0C123.5 708.0 123.7 719.3 121.0 728.0C118.3 736.7 114.2 744.0 110.0 752.0C105.8 760.0 99.7 768.0 96.0 776.0C92.3 784.0 92.7 791.7 88.0 800.0C83.3 808.3 72.7 817.7 68.0 826.0C63.3 834.3 61.0 841.8 60.0 850.0C59.0 858.2 65.8 870.0 62.0 875.0C58.2 880.0 41.2 884.2 37.0 880.0C32.8 875.8 35.7 858.3 37.0 850.0C38.3 841.7 39.5 837.5 45.0 830.0C50.5 822.5 63.3 813.7 70.0 805.0C76.7 796.3 81.3 786.8 85.0 778.0C88.7 769.2 88.7 760.3 92.0 752.0C95.3 743.7 100.5 736.2 105.0 728.0C109.5 719.8 115.5 711.2 119.0 703.0C122.5 694.8 125.2 687.8 126.0 679.0C126.8 670.2 123.8 659.8 124.0 650.0C124.2 640.2 124.3 630.0 127.0 620.0C129.7 610.0 135.8 594.0 140.0 590.0Z" fill="#f2f0ea"/>
<path d="M66.0 172.0C62.2 172.7 67.3 171.3 67.0 176.0C66.7 180.7 65.2 188.8 64.0 200.0C62.8 211.2 60.5 231.7 60.0 243.0C59.5 254.3 60.5 259.8 61.0 268.0C61.5 276.2 61.5 284.0 63.0 292.0C64.5 300.0 67.0 307.8 70.0 316.0C73.0 324.2 78.3 332.8 81.0 341.0C83.7 349.2 84.5 357.0 86.0 365.0C87.5 373.0 88.0 379.8 90.0 389.0C92.0 398.2 95.0 410.0 98.0 420.0C101.0 430.0 104.3 439.8 108.0 449.0C111.7 458.2 116.0 467.0 120.0 475.0C124.0 483.0 128.2 489.2 132.0 497.0C135.8 504.8 141.5 513.8 143.0 522.0C144.5 530.2 143.2 537.8 141.0 546.0C138.8 554.2 133.0 562.8 130.0 571.0C127.0 579.2 125.8 586.8 123.0 595.0C120.2 603.2 115.7 610.8 113.0 620.0C110.3 629.2 107.5 640.2 107.0 650.0C106.5 659.8 112.3 670.2 110.0 679.0C107.7 687.8 97.2 694.8 93.0 703.0C88.8 711.2 87.3 719.8 85.0 728.0C82.7 736.2 82.0 744.0 79.0 752.0C76.0 760.0 72.2 768.0 67.0 776.0C61.8 784.0 53.5 791.8 48.0 800.0C42.5 808.2 36.3 816.7 34.0 825.0C31.7 833.3 34.0 844.2 34.0 850.0C34.0 855.8 33.8 858.3 34.0 860.0C34.2 861.7 34.0 861.7 35.0 860.0C36.0 858.3 35.5 855.8 40.0 850.0C44.5 844.2 55.5 833.3 62.0 825.0C68.5 816.7 74.7 808.2 79.0 800.0C83.3 791.8 85.7 784.0 88.0 776.0C90.3 768.0 90.0 760.0 93.0 752.0C96.0 744.0 101.5 736.2 106.0 728.0C110.5 719.8 116.5 711.2 120.0 703.0C123.5 694.8 126.2 687.8 127.0 679.0C127.8 670.2 124.8 659.8 125.0 650.0C125.2 640.2 125.5 629.2 128.0 620.0C130.5 610.8 135.0 603.2 140.0 595.0C145.0 586.8 155.0 579.2 158.0 571.0C161.0 562.8 157.2 554.2 158.0 546.0C158.8 537.8 162.8 530.2 163.0 522.0C163.2 513.8 161.2 504.8 159.0 497.0C156.8 489.2 153.7 483.0 150.0 475.0C146.3 467.0 142.2 458.2 137.0 449.0C131.8 439.8 123.0 430.0 119.0 420.0C115.0 410.0 114.5 398.2 113.0 389.0C111.5 379.8 110.8 373.0 110.0 365.0C109.2 357.0 109.0 349.2 108.0 341.0C107.0 332.8 105.3 324.2 104.0 316.0C102.7 307.8 101.5 300.0 100.0 292.0C98.5 284.0 96.5 276.2 95.0 268.0C93.5 259.8 91.5 254.3 91.0 243.0C90.5 231.7 92.2 211.2 92.0 200.0C91.8 188.8 90.3 180.7 90.0 176.0C89.7 171.3 94.0 172.7 90.0 172.0C86.0 171.3 69.8 171.3 66.0 172.0Z" fill="#8fb3f3"/>
<ellipse cx="73.3" cy="236.0" rx="3.5" ry="5.4" fill="#dbe9d3" transform="rotate(-9 73.3 236.0)"/>
<ellipse cx="76.5" cy="251.2" rx="2.4" ry="5.5" fill="#f2f0ea" transform="rotate(-12 76.5 251.2)"/>
<ellipse cx="72.4" cy="266.5" rx="4.3" ry="5.7" fill="#e6eedf" transform="rotate(-18 72.4 266.5)"/>
<ellipse cx="79.1" cy="259.2" rx="3.6" ry="5.3" fill="#e6eedf" transform="rotate(-18 79.1 259.2)"/>
<ellipse cx="86.8" cy="287.8" rx="2.6" ry="5.7" fill="#e6eedf" transform="rotate(-16 86.8 287.8)"/>
<ellipse cx="76.8" cy="293.6" rx="4.1" ry="7.2" fill="#f2f0ea" transform="rotate(-9 76.8 293.6)"/>
<ellipse cx="87.9" cy="318.4" rx="3.4" ry="8.2" fill="#dbe9d3" transform="rotate(-2 87.9 318.4)"/>
<ellipse cx="88.2" cy="315.1" rx="2.9" ry="9.8" fill="#f2f0ea" transform="rotate(-4 88.2 315.1)"/>
<ellipse cx="90.0" cy="337.0" rx="2.7" ry="7.1" fill="#e6eedf" transform="rotate(-12 90.0 337.0)"/>
<ellipse cx="99.7" cy="333.4" rx="2.5" ry="9.5" fill="#dbe9d3" transform="rotate(-20 99.7 333.4)"/>
<ellipse cx="97.2" cy="374.2" rx="1.6" ry="8.3" fill="#dbe9d3" transform="rotate(-1 97.2 374.2)"/>
<ellipse cx="96.5" cy="362.0" rx="2.4" ry="9.8" fill="#f2f0ea" transform="rotate(-23 96.5 362.0)"/>
<ellipse cx="105.6" cy="388.5" rx="2.6" ry="5.4" fill="#e6eedf" transform="rotate(-4 105.6 388.5)"/>
<ellipse cx="102.2" cy="392.6" rx="2.2" ry="9.3" fill="#dbe9d3" transform="rotate(2 102.2 392.6)"/>
<ellipse cx="104.5" cy="419.2" rx="1.5" ry="5.7" fill="#dbe9d3" transform="rotate(-23 104.5 419.2)"/>
<ellipse cx="105.4" cy="415.0" rx="1.9" ry="10.2" fill="#dbe9d3" transform="rotate(-23 105.4 415.0)"/>
<ellipse cx="121.4" cy="444.6" rx="2.1" ry="7.6" fill="#e6eedf" transform="rotate(-8 121.4 444.6)"/>
<ellipse cx="121.5" cy="446.2" rx="3.8" ry="10.7" fill="#f2f0ea" transform="rotate(-20 121.5 446.2)"/>
<ellipse cx="130.8" cy="478.2" rx="1.8" ry="10.0" fill="#dbe9d3" transform="rotate(-20 130.8 478.2)"/>
<ellipse cx="129.0" cy="473.4" rx="2.7" ry="8.4" fill="#e6eedf" transform="rotate(4 129.0 473.4)"/>
<ellipse cx="149.4" cy="506.0" rx="3.0" ry="9.4" fill="#e6eedf" transform="rotate(-11 149.4 506.0)"/>
<ellipse cx="148.7" cy="494.8" rx="2.5" ry="5.6" fill="#f2f0ea" transform="rotate(-6 148.7 494.8)"/>
<ellipse cx="150.5" cy="531.7" rx="1.9" ry="5.7" fill="#f2f0ea" transform="rotate(-7 150.5 531.7)"/>
<ellipse cx="149.0" cy="515.0" rx="1.5" ry="7.2" fill="#f2f0ea" transform="rotate(-24 149.0 515.0)"/>
<ellipse cx="150.3" cy="539.0" rx="1.5" ry="7.1" fill="#f2f0ea" transform="rotate(-14 150.3 539.0)"/>
<ellipse cx="146.9" cy="545.8" rx="2.3" ry="7.9" fill="#f2f0ea" transform="rotate(-16 146.9 545.8)"/>
<ellipse cx="139.5" cy="567.9" rx="2.3" ry="10.0" fill="#f2f0ea" transform="rotate(-20 139.5 567.9)"/>
<ellipse cx="140.7" cy="580.0" rx="2.5" ry="9.1" fill="#e6eedf" transform="rotate(2 140.7 580.0)"/>
<ellipse cx="130.1" cy="597.9" rx="1.5" ry="10.1" fill="#f2f0ea" transform="rotate(-9 130.1 597.9)"/>
<ellipse cx="130.5" cy="589.5" rx="1.8" ry="8.0" fill="#e6eedf" transform="rotate(-6 130.5 589.5)"/>
<ellipse cx="118.2" cy="659.7" rx="2.3" ry="9.8" fill="#e6eedf" transform="rotate(-0 118.2 659.7)"/>
<ellipse cx="118.2" cy="644.0" rx="1.8" ry="9.4" fill="#dbe9d3" transform="rotate(5 118.2 644.0)"/>
<ellipse cx="118.3" cy="672.9" rx="1.8" ry="7.1" fill="#e6eedf" transform="rotate(-1 118.3 672.9)"/>
<ellipse cx="121.8" cy="688.1" rx="1.5" ry="6.3" fill="#f2f0ea" transform="rotate(-18 121.8 688.1)"/>
<ellipse cx="104.7" cy="702.7" rx="3.7" ry="8.7" fill="#e6eedf" transform="rotate(-25 104.7 702.7)"/>
<ellipse cx="104.8" cy="705.9" rx="3.4" ry="5.7" fill="#e6eedf" transform="rotate(-13 104.8 705.9)"/>
<ellipse cx="97.6" cy="727.6" rx="1.6" ry="9.7" fill="#e6eedf" transform="rotate(-15 97.6 727.6)"/>
<ellipse cx="94.6" cy="726.0" rx="2.9" ry="9.3" fill="#f2f0ea" transform="rotate(-20 94.6 726.0)"/>
<ellipse cx="73.5" cy="777.8" rx="2.0" ry="8.9" fill="#e6eedf" transform="rotate(-7 73.5 777.8)"/>
<ellipse cx="81.5" cy="779.1" rx="1.8" ry="8.3" fill="#f2f0ea" transform="rotate(-21 81.5 779.1)"/>
<ellipse cx="67.2" cy="804.5" rx="2.1" ry="9.5" fill="#f2f0ea" transform="rotate(-21 67.2 804.5)"/>
<ellipse cx="67.5" cy="794.2" rx="2.5" ry="6.8" fill="#e6eedf" transform="rotate(-18 67.5 794.2)"/>
<g fill="none" stroke="#8fb3f3" stroke-linecap="round" stroke-linejoin="round">
<!-- Aldan -->
<path d="M730 174 C735 184 734 192 729 200 C723 210 716 218 712 226 C709 234 712 242 718 248 C724 255 730 261 738 264 C746 267 752 270 759 275 C765 278 772 275 778 270 C786 262 795 250 806 238 C813 232 822 230 832 229 C842 228 850 227 858 228 L871 232" stroke-width="3.6"/>
<path d="M713 226 C711 236 716 242 721 246 M759 268 C764 266 772 262 780 260 C778 266 772 272 766 276" stroke-width="1.6"/>
<path d="M871 249 C862 256 858 266 860 276 C864 282 868 284 871 286 M871 270 C864 278 862 288 864 296 C867 301 870 303 872 304" stroke-width="3"/>
<!-- Aldan under info window -->
<path d="M922 375 C932 381 940 382 950 380 C960 377 968 382 976 389 C986 397 996 402 1004 408 C1012 414 1020 420 1030 426 C1038 431 1044 440 1052 448" stroke-width="3.4"/>
<path d="M930 372 C936 376 940 386 950 388 C962 390 970 386 980 392 M1000 372 C996 380 1000 392 1008 398 C1016 404 1026 412 1036 418 C1044 424 1048 430 1052 436 M1018 372 C1012 380 1008 388 1010 396 M985 396 C992 404 1004 414 1014 420" stroke-width="1.8"/>
<path d="M924 380 C930 388 938 392 946 392 C954 392 960 396 968 398 C976 400 984 396 990 400 C998 406 1004 412 1012 414 C1020 416 1026 416 1032 420 M940 376 C944 382 950 384 956 382 C962 380 966 376 972 378 C978 382 982 390 990 392 M950 372 C952 378 958 380 962 386 C966 392 974 392 978 388 M1024 402 C1030 408 1036 412 1040 420 C1044 428 1048 432 1052 436 M1002 396 C1008 400 1016 404 1022 410 C1028 416 1034 424 1042 428 M1034 438 C1040 442 1046 446 1052 452 M1040 448 C1044 452 1048 456 1052 460" stroke-width="1.5" stroke="#9dbdf5"/>
<path d="M1051.5 494.7 L1032.0 503.0 L1027.0 513.0 L1035.6 529.6 L1045.0 537.8 L1042.0 546.0 L1029.0 546.8 L1007.0 533.0 L999.0 534.5 L1001.8 549.5 L999.0 559.4 L1007.0 567.7 L1005.7 576.0 L995.8 589.0 L990.8 605.8 L985.8 605.8 L984.0 599.0 L976.0 589.0 L957.6 581.0 L951.0 586.0 L954.0 597.5 L942.7 604.0 L936.0 586.0 L927.8 582.6 L911.0 591.0 L913.0 599.0 L922.8 604.0 L934.4 602.5 L939.4 622.4 L944.4 642.0 L929.5 655.6 L909.5 662.0 L899.6 665.5 L886.0 677.0 L873.0 687.0 L863.0 682.0 L850.0 687.0 L840.0 680.5 L836.6 685.4 L840.0 692.0 L830.0 705.0 L820.0 717.0 L814.0 718.0 L808.0 712.0 L804.0 714.0 L800.0 720.0 L802.0 726.0 L806.0 732.0 L814.0 738.0 L824.0 742.0 L826.0 750.0 L826.0 758.0 L822.0 766.0 L818.0 772.0 L812.0 782.0 L806.0 792.0 L800.0 800.0 L794.0 806.0 L788.0 810.0 L782.0 813.0 L776.0 816.0 L768.0 818.0 L763.0 816.0 L760.0 806.0 L759.0 796.0 L757.0 788.0 L753.0 784.0 L748.0 784.0 L745.0 788.0 L742.0 794.0 L741.0 800.0 L738.0 806.0 L734.0 814.0 L728.0 822.0 L722.0 830.0 L710.0 838.0 L694.0 842.0 L682.0 850.0 L674.0 860.0 L668.0 872.0 L668.0 882.0 L670.0 890.0 L676.0 894.0 L673.0 900.0 L668.0 912.0 L662.0 926.0 L654.0 938.0 L648.0 944.0 L642.0 946.0 L636.0 948.0" stroke-width="1.15"/>
<path d="M998 540 C1002 534 1008 530 1014 534" stroke-width="0" />
</g>
<!-- top braided bit -->
<path d="M263 174 L347 174 C345 182 330 190 312 196 C304 193 296 192 290 190 C280 186 270 182 263 174 Z" fill="#8fb3f3"/>
<path d="M285 178 L325 178 C318 184 308 188 300 188 Z" fill="#d1e4c8"/>
<path d="M302 180 L338 177 C330 185 320 189 312 191 Z" fill="#dde9d5"/>

<polygon points="186.6,245.0 183.5,245.6 181.0,244.5 179.5,242.4 180.2,239.9 182.6,240.6 185.9,242.1" fill="#f1f0e9"/>
<polygon points="151.4,190.1 150.9,191.5 149.4,191.4 148.9,190.6 148.7,189.5 149.4,188.9 150.8,188.8" fill="#f1f0e9"/>
<polygon points="117.0,237.2 113.4,241.8 109.9,241.9 109.4,237.4 111.5,230.2 115.1,229.5 116.2,232.2" fill="#f1f0e9"/>
<polygon points="97.5,245.9 96.4,249.1 94.8,249.0 93.8,246.5 94.6,245.1 96.6,242.5 97.7,244.2" fill="#f1f0e9"/>
<polygon points="202.0,330.5 198.2,330.9 196.3,329.9 193.8,325.3 195.4,325.1 198.1,325.5 201.2,328.6" fill="#f1f0e9"/>
<polygon points="203.8,250.0 203.5,251.0 201.9,251.4 200.6,250.8 200.5,249.6 202.0,248.5 203.1,248.7" fill="#f1f0e9"/>
<polygon points="206.1,262.6 204.6,263.6 203.4,263.5 202.2,262.1 202.6,260.8 203.8,260.8 205.4,261.2" fill="#f1f0e9"/>
<polygon points="324.8,188.7 323.8,190.6 320.8,191.0 319.1,190.0 319.8,188.5 321.9,186.4 323.2,187.3" fill="#f1f0e9"/>
<polygon points="206.2,331.3 205.4,332.5 201.9,332.7 201.0,331.7 199.8,330.5 202.0,329.2 204.6,329.2" fill="#f1f0e9"/>
<polygon points="333.6,364.5 333.5,366.1 330.3,367.0 326.0,366.8 326.7,364.6 329.6,363.1 331.2,362.9" fill="#f1f0e9"/>
<polygon points="278.8,367.6 277.9,368.4 274.5,366.8 271.9,364.8 273.7,363.3 276.5,364.1 277.9,365.7" fill="#f1f0e9"/>
<polygon points="320.1,350.6 319.2,352.4 318.0,352.4 316.2,351.7 315.9,350.4 317.2,349.8 319.5,349.9" fill="#f1f0e9"/>
<polygon points="273.9,560.3 272.1,562.3 269.4,562.4 265.9,560.6 266.3,559.0 269.8,557.7 272.3,558.4" fill="#f1f0e9"/>
<polygon points="266.6,580.9 265.3,582.4 259.2,582.4 257.9,580.1 258.4,577.8 261.2,576.8 264.7,577.7" fill="#f1f0e9"/>
<polygon points="242.7,589.5 241.5,591.5 239.1,592.1 237.0,591.0 238.0,589.4 239.1,587.7 241.2,588.3" fill="#f1f0e9"/>
<polygon points="579.3,703.1 579.0,705.0 575.6,707.4 572.5,707.9 570.4,705.9 573.8,703.2 576.6,702.3" fill="#f1f0e9"/>
<polygon points="567.8,711.7 565.7,716.7 563.1,716.8 562.7,713.7 563.1,710.0 564.8,707.9 567.4,709.0" fill="#f1f0e9"/>
<polygon points="592.6,715.5 589.8,718.3 589.0,717.7 588.1,715.1 588.8,712.5 590.6,711.1 591.7,712.7" fill="#f1f0e9"/>
<polygon points="602.1,705.0 601.2,706.0 599.9,706.1 597.6,705.5 597.5,704.3 599.8,703.4 601.6,704.2" fill="#f1f0e9"/>
<polygon points="228.8,577.5 227.8,578.4 225.3,576.9 224.7,575.5 226.0,573.6 228.2,573.8 229.7,575.6" fill="#f1f0e9"/>
<polygon points="201.4,758.6 201.4,761.6 199.4,762.8 194.4,763.7 193.7,761.1 196.1,757.0 200.0,756.6" fill="#f1f0e9"/>
<polygon points="193.1,770.1 192.2,772.2 188.9,772.4 186.5,771.5 186.6,768.3 189.2,767.5 192.3,767.8" fill="#f1f0e9"/>
<polygon points="214.1,772.4 213.4,773.4 208.8,774.4 206.8,772.8 207.0,771.0 209.7,770.1 212.8,769.9" fill="#f1f0e9"/>
<polygon points="680.5,702.7 680.2,704.6 678.3,704.8 677.3,703.4 677.9,702.1 678.4,701.3 680.1,701.3" fill="#f1f0e9"/>
<polygon points="685.4,712.1 684.7,712.8 683.8,712.8 682.5,712.3 682.5,711.7 684.0,711.1 684.8,711.4" fill="#f1f0e9"/>
<polygon points="125.1,854.9 121.6,855.8 116.8,854.8 114.4,852.8 116.0,850.0 120.3,850.4 123.9,851.9" fill="#f1f0e9"/>
<polygon points="104.9,874.0 102.0,874.1 98.1,872.9 94.1,868.0 96.8,866.5 99.9,865.9 104.0,870.1" fill="#f1f0e9"/>
<polygon points="121.4,880.9 120.6,882.1 116.3,882.1 113.7,880.7 113.4,878.4 116.6,877.2 120.3,878.4" fill="#f1f0e9"/>
<polygon points="98.0,894.0 96.4,896.8 91.3,898.1 86.9,898.1 86.2,894.2 91.0,891.3 95.8,892.2" fill="#f1f0e9"/>
<polygon points="79.1,905.4 75.9,907.2 73.3,908.2 69.4,906.8 71.0,903.6 72.3,902.2 75.9,903.1" fill="#f1f0e9"/>
<polygon points="58.4,890.4 56.5,891.6 54.3,892.4 52.6,891.2 51.3,888.6 55.0,888.1 57.5,888.0" fill="#f1f0e9"/>
<polygon points="133.4,837.0 131.2,837.1 129.0,836.5 126.7,834.2 128.1,832.9 129.9,832.8 133.7,835.1" fill="#f1f0e9"/>
<polygon points="110.2,842.3 110.5,843.4 107.4,844.0 105.7,842.9 105.7,841.2 107.6,840.6 110.2,840.5" fill="#f1f0e9"/>
<polygon points="389.2,806.4 386.7,807.5 384.9,806.5 383.4,804.4 383.9,802.0 386.9,802.5 388.8,804.8" fill="#f1f0e9"/>
<polygon points="62.4,918.7 62.0,921.0 60.8,922.0 57.8,922.0 57.7,920.2 58.9,918.2 61.1,917.7" fill="#f1f0e9"/>
<polygon points="999.2,183.7 998.8,186.0 997.9,187.4 996.2,186.6 994.4,182.9 994.7,180.5 997.5,181.2" fill="#f1f0e9"/>
<polygon points="985.4,190.2 984.8,191.7 983.3,192.1 982.6,190.9 983.2,188.9 983.8,187.5 984.7,188.2" fill="#f1f0e9"/>
<polygon points="1001.5,199.7 1001.0,201.1 999.8,202.1 998.4,200.7 998.6,198.8 1000.0,198.1 1001.1,199.0" fill="#f1f0e9"/>
<polygon points="963.5,215.1 963.3,216.3 961.9,216.8 960.9,216.0 961.1,214.3 962.0,213.3 962.9,213.5" fill="#f1f0e9"/>
<polygon points="937.8,197.9 937.5,199.5 936.9,200.0 936.4,198.7 936.3,197.5 936.6,196.2 937.6,196.3" fill="#f1f0e9"/>
<polygon points="1002.7,815.1 1002.4,816.5 1002.0,816.6 1001.2,815.6 1001.4,814.2 1001.8,813.4 1002.6,814.1" fill="#f1f0e9"/>
<polygon points="1007.0,830.4 1006.4,830.9 1005.8,831.3 1005.4,830.6 1005.3,829.5 1005.8,828.6 1006.5,829.0" fill="#f1f0e9"/>
<polygon points="993.9,789.1 993.5,790.2 992.5,790.4 992.2,789.4 992.0,788.6 992.9,787.6 993.5,788.0" fill="#f1f0e9"/>
<polygon points="960.4,655.1 959.8,656.2 958.6,656.1 957.6,655.9 957.8,654.0 958.5,654.0 959.7,653.9" fill="#f1f0e9"/>
<polygon points="759.3,737.3 759.3,738.6 758.9,739.7 756.9,739.5 756.2,738.2 756.7,736.9 758.6,736.0" fill="#f1f0e9"/>
<polygon points="766.1,745.8 765.7,747.2 764.6,747.1 763.9,746.6 764.0,745.3 764.8,744.4 765.8,744.9" fill="#f1f0e9"/>
<polygon points="64.5,865.3 53.8,875.7 42.9,883.3 38.7,866.6 41.2,844.9 53.7,838.0 60.9,847.9" fill="#f1f0e9"/>
<polygon points="108.3,843.6 100.7,845.8 81.7,841.9 77.0,836.2 73.6,829.3 87.7,831.8 103.8,838.1" fill="#f1f0e9"/>
<polygon points="100.1,854.5 94.5,856.0 89.0,855.0 85.8,852.9 86.0,847.9 90.3,848.1 96.3,849.6" fill="#f1f0e9"/>
<polygon points="97.3,881.8 93.4,885.4 79.6,882.0 73.7,875.4 74.0,871.5 87.6,872.5 93.0,874.4" fill="#f1f0e9"/>
<polygon points="77.7,894.0 72.5,900.7 63.7,901.8 55.0,902.5 56.8,898.4 63.0,891.3 70.1,890.6" fill="#f1f0e9"/>
<polygon points="46.9,889.4 44.2,892.3 41.6,893.5 37.4,891.5 38.1,888.9 42.0,886.6 44.8,887.5" fill="#f1f0e9"/>
<polygon points="48.0,430.2 46.8,431.2 45.3,431.3 44.0,430.4 44.3,429.1 46.0,428.6 47.2,428.9" fill="#f1f0e9"/>
<polygon points="68.1,440.3 67.2,441.1 65.1,442.1 64.3,440.8 63.9,439.5 65.1,437.9 66.9,438.5" fill="#f1f0e9"/>
<polygon points="61.4,454.7 60.6,456.0 60.0,456.3 58.5,455.6 58.9,454.8 59.6,453.9 60.8,453.7" fill="#f1f0e9"/>
<polygon points="71.2,468.0 70.9,468.5 69.9,469.0 68.8,468.5 68.9,467.5 69.5,467.0 71.0,467.5" fill="#f1f0e9"/>
<polygon points="86.7,600.1 85.2,601.2 84.0,602.2 82.0,600.5 82.0,599.2 83.1,597.9 85.4,598.8" fill="#f1f0e9"/>
<polygon points="61.7,649.7 61.4,651.1 59.4,651.3 58.8,650.7 58.5,649.6 59.9,648.6 61.5,648.8" fill="#f1f0e9"/>
<polygon points="151.4,642.8 151.1,644.0 150.0,644.5 148.5,643.4 148.8,642.7 149.9,641.9 150.8,642.0" fill="#f1f0e9"/>
<polygon points="120.4,208.9 117.9,212.4 116.1,212.5 116.9,207.3 118.8,202.7 121.1,199.7 122.6,200.1" fill="#8fb3f3"/>
<polygon points="171.3,189.3 169.8,190.5 166.0,190.1 164.1,187.7 165.0,185.9 168.3,184.8 171.5,187.6" fill="#8fb3f3"/>
<polygon points="189.1,176.6 187.6,178.3 185.1,178.6 182.8,178.3 183.5,176.2 185.5,175.5 188.0,175.6" fill="#8fb3f3"/>
<polygon points="213.0,201.0 212.2,202.1 210.1,201.7 208.4,200.4 209.0,199.0 210.8,199.1 212.4,200.1" fill="#8fb3f3"/>
<polygon points="205.1,211.7 204.3,212.9 202.6,212.7 200.4,211.4 200.9,210.9 202.4,210.4 204.3,210.9" fill="#8fb3f3"/>
<polygon points="170.2,223.6 169.2,224.1 166.6,223.4 165.9,222.3 166.4,221.5 167.7,221.0 170.5,222.5" fill="#8fb3f3"/>
<polygon points="182.1,221.9 181.2,222.2 179.2,222.2 178.2,221.1 178.2,219.7 180.3,219.7 181.5,220.2" fill="#8fb3f3"/>
<polygon points="181.4,243.0 179.7,243.4 176.5,242.8 173.7,239.4 174.5,237.9 177.0,237.8 180.5,240.6" fill="#8fb3f3"/>
<polygon points="182.0,271.6 180.0,273.0 177.0,271.7 175.7,269.0 175.7,266.9 178.9,267.1 182.0,270.1" fill="#8fb3f3"/>
<polygon points="138.3,267.9 137.7,271.5 136.7,271.0 136.2,269.9 136.3,266.2 137.3,264.4 138.3,265.8" fill="#8fb3f3"/>
<polygon points="141.0,277.6 140.7,278.7 138.9,279.5 138.8,277.9 139.0,276.0 140.0,275.2 140.9,276.4" fill="#8fb3f3"/>
<polygon points="191.9,282.9 190.9,283.5 189.1,282.7 188.3,281.6 188.8,280.6 190.3,281.0 191.5,281.9" fill="#8fb3f3"/>
<polygon points="198.9,287.0 197.9,287.3 195.9,287.0 194.7,285.6 195.0,284.6 197.4,284.6 198.5,285.5" fill="#8fb3f3"/>
<polygon points="174.0,300.6 171.7,301.5 168.0,301.8 166.1,301.0 164.7,299.9 168.5,299.5 171.8,299.9" fill="#8fb3f3"/>
<polygon points="192.5,322.3 191.8,323.1 189.8,322.5 188.8,321.5 189.9,320.0 191.2,319.7 192.4,320.8" fill="#8fb3f3"/>
<polygon points="186.4,341.2 184.3,341.9 181.4,341.4 179.3,339.9 179.4,337.9 181.5,337.6 184.6,338.6" fill="#8fb3f3"/>
<polygon points="200.5,348.1 200.0,348.7 197.7,348.2 195.2,346.3 196.3,345.5 198.6,345.6 200.5,345.8" fill="#8fb3f3"/>
<polygon points="161.4,358.5 158.4,360.2 156.3,358.3 153.8,356.2 156.4,354.3 159.0,354.6 160.6,356.3" fill="#8fb3f3"/>
<polygon points="125.6,351.7 125.0,352.8 123.4,354.4 121.7,354.4 120.8,353.5 122.0,351.7 123.7,351.6" fill="#8fb3f3"/>
<polygon points="188.8,361.7 187.0,361.7 185.4,361.5 183.9,360.1 184.1,359.5 186.1,359.0 187.9,360.0" fill="#8fb3f3"/>
<polygon points="177.4,394.0 175.7,394.3 171.5,393.1 170.4,391.6 170.2,389.5 174.0,389.7 176.3,391.6" fill="#8fb3f3"/>
<polygon points="180.4,415.5 178.6,417.7 174.7,416.0 172.2,411.8 172.9,409.4 176.7,408.2 180.2,413.0" fill="#8fb3f3"/>
<polygon points="156.3,411.0 154.4,411.8 150.7,410.0 147.9,407.9 148.4,406.6 152.4,407.3 155.4,408.9" fill="#8fb3f3"/>
<polygon points="219.7,230.1 218.6,231.0 217.5,231.0 216.6,230.4 216.2,229.4 217.8,228.6 218.9,228.9" fill="#8fb3f3"/>
<polygon points="249.1,231.2 247.5,232.5 245.4,233.1 243.6,231.5 244.5,230.1 245.7,228.9 248.3,229.6" fill="#8fb3f3"/>
<polygon points="300.1,245.0 300.1,249.1 297.6,250.5 296.1,247.2 295.8,244.8 296.6,242.0 298.9,242.2" fill="#8fb3f3"/>
<polygon points="294.4,270.0 294.7,271.8 292.4,273.3 289.9,273.8 288.6,271.4 289.8,270.3 292.4,269.5" fill="#8fb3f3"/>
<polygon points="253.9,276.3 253.8,277.5 252.0,277.3 250.9,276.9 251.1,275.7 252.6,274.6 253.5,274.7" fill="#8fb3f3"/>
<polygon points="301.3,319.6 299.8,322.6 297.2,322.5 297.9,320.2 299.7,316.8 302.0,314.5 302.4,316.6" fill="#8fb3f3"/>
<polygon points="284.3,331.5 283.3,332.5 280.7,332.4 279.2,331.2 280.5,327.4 282.8,326.7 284.5,327.3" fill="#8fb3f3"/>
<polygon points="291.9,303.1 291.2,304.2 290.1,304.7 289.5,303.7 289.4,302.3 290.4,301.4 291.8,302.1" fill="#8fb3f3"/>
<polygon points="266.0,340.1 266.1,341.5 265.4,342.6 264.4,341.5 263.5,339.7 263.2,336.9 264.9,337.9" fill="#8fb3f3"/>
<polygon points="328.2,343.2 324.7,346.7 317.1,349.7 312.7,348.9 311.1,348.0 314.4,345.0 325.3,341.8" fill="#8fb3f3"/>
<polygon points="328.7,340.5 327.5,343.1 325.4,343.6 323.3,340.9 323.2,338.0 326.0,336.4 328.6,337.7" fill="#8fb3f3"/>
<polygon points="347.9,349.8 346.8,351.3 344.3,353.3 341.3,353.0 341.1,350.9 342.3,349.6 345.0,349.1" fill="#8fb3f3"/>
<polygon points="355.8,333.8 354.3,334.8 351.3,333.6 349.5,332.4 350.0,331.5 352.8,331.4 354.9,333.0" fill="#8fb3f3"/>
<polygon points="257.1,371.0 255.3,372.1 251.7,371.2 247.3,368.3 248.4,366.5 252.0,366.1 256.4,367.9" fill="#8fb3f3"/>
<polygon points="272.5,359.5 273.9,362.3 273.2,364.3 269.7,363.5 268.7,360.7 268.5,358.5 270.0,357.7" fill="#8fb3f3"/>
<polygon points="342.2,374.1 340.2,375.1 338.0,374.2 336.3,372.9 336.9,370.9 338.6,370.9 341.1,372.4" fill="#8fb3f3"/>
<polygon points="379.3,369.4 377.6,370.7 373.3,372.2 371.3,372.0 371.4,370.9 373.0,369.5 377.3,369.0" fill="#8fb3f3"/>
<polygon points="409.6,352.9 409.2,353.7 407.0,353.4 405.7,351.6 405.9,350.9 408.0,350.5 409.4,350.9" fill="#8fb3f3"/>
<polygon points="396.6,336.2 395.9,336.9 393.2,336.8 390.8,336.1 391.9,335.3 393.0,335.0 395.9,335.4" fill="#8fb3f3"/>
<polygon points="356.7,395.7 354.9,397.0 353.5,396.7 351.5,395.3 352.0,394.1 354.0,393.3 355.4,393.9" fill="#8fb3f3"/>
<polygon points="406.2,387.3 405.4,388.0 404.0,388.3 401.8,388.4 401.6,387.6 403.7,386.8 405.4,386.6" fill="#8fb3f3"/>
<polygon points="344.9,420.3 343.9,421.7 336.9,419.7 334.3,416.9 335.5,414.8 338.9,414.2 346.3,417.9" fill="#8fb3f3"/>
<polygon points="353.6,424.6 351.8,427.0 346.1,428.8 343.9,428.3 343.4,426.2 345.9,425.0 352.0,422.9" fill="#8fb3f3"/>
<polygon points="336.2,426.8 334.7,427.4 332.2,426.2 330.2,423.5 331.1,422.7 333.8,423.1 336.7,424.3" fill="#8fb3f3"/>
<polygon points="348.4,432.6 347.2,432.9 343.9,433.1 341.6,432.3 341.0,430.8 343.8,430.7 348.3,431.2" fill="#8fb3f3"/>
<polygon points="265.8,546.4 265.7,549.2 263.8,549.4 262.7,548.3 261.5,544.1 262.3,542.8 263.8,543.1" fill="#8fb3f3"/>
<polygon points="287.0,555.8 285.8,556.6 284.2,556.5 282.9,555.0 283.2,554.0 285.5,553.5 286.4,554.1" fill="#8fb3f3"/>
<polygon points="262.6,574.9 260.7,575.4 257.0,573.6 255.2,571.3 255.4,570.3 258.9,570.8 261.5,572.3" fill="#8fb3f3"/>
<polygon points="273.7,586.4 270.7,587.0 266.2,584.2 265.0,582.5 265.5,580.3 268.9,579.2 272.4,582.0" fill="#8fb3f3"/>
<polygon points="251.5,599.1 250.0,603.0 248.2,604.7 245.8,601.4 245.9,598.1 248.8,595.2 251.0,597.9" fill="#8fb3f3"/>
<polygon points="267.0,610.8 265.8,612.4 263.0,613.6 261.0,613.9 260.3,612.9 262.2,610.5 265.1,609.7" fill="#8fb3f3"/>
<polygon points="385.3,556.0 383.3,556.8 382.1,556.4 380.4,554.4 380.9,553.1 383.1,553.5 384.4,554.3" fill="#8fb3f3"/>
<polygon points="407.1,604.8 406.8,605.8 403.9,607.3 400.7,607.9 400.3,606.9 402.4,605.1 405.3,604.0" fill="#8fb3f3"/>
<polygon points="304.5,531.7 302.4,532.0 299.3,530.9 297.5,529.6 298.9,528.1 300.2,528.1 303.1,530.2" fill="#8fb3f3"/>
<polygon points="182.8,597.1 181.5,598.2 179.0,598.9 177.0,597.5 177.2,596.2 178.6,595.2 182.0,595.8" fill="#8fb3f3"/>
<polygon points="182.1,612.1 181.3,612.8 179.4,613.3 178.5,612.4 178.2,611.4 179.6,610.7 181.4,611.3" fill="#8fb3f3"/>
<polygon points="189.6,577.4 187.9,577.8 186.0,577.8 184.8,577.1 184.6,576.3 186.7,576.2 188.8,576.7" fill="#8fb3f3"/>
<polygon points="210.9,570.3 209.9,571.1 208.4,570.9 207.2,570.4 207.2,569.5 208.6,568.7 210.1,569.3" fill="#8fb3f3"/>
<polygon points="156.8,410.0 155.3,410.8 151.1,409.4 149.2,407.9 150.3,406.0 153.0,406.3 155.6,408.6" fill="#8fb3f3"/>
<polygon points="153.4,437.2 152.9,437.9 149.3,437.6 148.8,436.7 148.1,435.2 150.8,435.0 152.9,435.7" fill="#8fb3f3"/>
<polygon points="212.7,570.0 212.3,572.2 211.2,572.8 209.5,572.1 208.8,571.1 209.9,569.7 211.7,569.2" fill="#8fb3f3"/>
<polygon points="198.8,597.8 198.1,599.1 196.9,599.1 194.8,598.3 195.3,597.6 197.1,596.6 198.4,597.2" fill="#8fb3f3"/>
<polygon points="145.5,804.5 144.7,805.6 140.0,806.3 136.9,805.3 135.9,803.8 139.5,803.0 143.5,803.3" fill="#8fb3f3"/>
<polygon points="118.5,859.8 117.4,861.4 114.1,861.6 112.2,860.4 112.4,859.0 114.4,858.7 116.6,858.8" fill="#8fb3f3"/>
<polygon points="111.1,887.0 110.3,888.0 108.5,888.1 107.7,887.5 107.8,886.3 108.6,885.8 110.5,886.0" fill="#8fb3f3"/>
<polygon points="96.3,846.0 96.2,846.6 95.0,846.8 93.8,846.5 94.0,845.6 95.0,845.0 95.6,845.2" fill="#8fb3f3"/>
<polygon points="101.2,823.0 100.8,823.6 99.6,823.9 98.5,823.2 99.1,822.5 99.9,822.1 101.1,822.3" fill="#8fb3f3"/>
<polygon points="192.3,782.3 191.2,783.3 188.4,783.2 186.3,782.1 186.0,781.2 188.9,781.1 190.9,781.3" fill="#8fb3f3"/>
<polygon points="557.4,839.6 555.7,840.4 549.7,839.3 547.8,837.9 546.5,836.1 552.5,836.1 554.3,837.1" fill="#8fb3f3"/>
<polygon points="513.3,612.0 513.1,612.6 511.8,612.9 510.9,612.5 511.0,611.8 511.7,611.2 512.8,611.5" fill="#8fb3f3"/>
<polygon points="508.0,632.0 507.9,632.6 506.7,632.8 506.0,632.2 506.1,631.6 507.0,631.1 507.8,631.3" fill="#8fb3f3"/>
<polygon points="681.5,582.2 680.7,582.5 679.9,583.0 678.7,582.3 678.7,581.8 679.5,581.4 680.8,581.1" fill="#8fb3f3"/>
<polygon points="242.5,910.1 242.0,910.5 241.0,910.8 239.8,910.6 239.8,909.7 240.8,909.0 242.0,909.5" fill="#8fb3f3"/>
<polygon points="333.5,910.0 332.3,910.7 330.4,910.9 329.2,910.5 329.2,909.6 330.5,909.0 332.1,908.9" fill="#8fb3f3"/>
<polygon points="574.2,720.8 572.1,721.6 569.4,720.9 566.5,719.7 566.8,718.7 569.9,718.7 571.9,719.4" fill="#8fb3f3"/>
<polygon points="584.0,735.2 583.9,736.3 582.8,736.3 582.0,735.6 581.8,734.4 582.6,733.8 583.9,733.9" fill="#8fb3f3"/>
<path d="M125 697 L126.5 715 L121.6 740 L113 757 L103 776 L93.5 782.6 L91 796 L87 810 L78.8 816 L62 833 L70 847 L64 863 L44.6 874 L34 879" fill="none" stroke="#e6b755" stroke-width="3.0" stroke-linejoin="round" stroke-linecap="round"/>
<path d="M125 697 L126.5 715 L121.6 740 L113 757 L103 776 L93.5 782.6 L91 796 L87 810 L78.8 816 L62 833 L70 847 L64 863 L44.6 874 L34 879" fill="none" stroke="#fbe08a" stroke-width="1.6" stroke-linejoin="round" stroke-linecap="round"/>
<path d="M125 697 C128 680 134 662 140 655 C146 650 152 650 157 649 C168 646 178 640 187 637 C192 634 196 628 200.5 627 C210 625 220 625 230.5 623.7 C240 620 248 615 254 612 C258 609 262 608 267 608.6 C274 610 280 612 284 613.6 L300.7 618.7 L330 622.5 L360 627 L379 637 C390 640 396 644 400 647 L421 653 C430 660 440 664 450 668 L480 681 C500 688 520 692 540 697 C550 698 560 696 568 693 L584 688 L618 680 L680 640 L704 628 L730 604 L742 590 L781 545 C786 546 792 540 795 528 C797 518 798 500 800.5 486 L797 455 C805 446 820 436 830 429 C838 422 844 418 850 415 C858 410 866 408 875 406 L903 396.5 L916 399 L932 406 L978 423 L1013 428 L1021 433 L1052 428" fill="none" stroke="#e6b755" stroke-width="3.0" stroke-linejoin="round" stroke-linecap="round"/>
<path d="M125 697 C128 680 134 662 140 655 C146 650 152 650 157 649 C168 646 178 640 187 637 C192 634 196 628 200.5 627 C210 625 220 625 230.5 623.7 C240 620 248 615 254 612 C258 609 262 608 267 608.6 C274 610 280 612 284 613.6 L300.7 618.7 L330 622.5 L360 627 L379 637 C390 640 396 644 400 647 L421 653 C430 660 440 664 450 668 L480 681 C500 688 520 692 540 697 C550 698 560 696 568 693 L584 688 L618 680 L680 640 L704 628 L730 604 L742 590 L781 545 C786 546 792 540 795 528 C797 518 798 500 800.5 486 L797 455 C805 446 820 436 830 429 C838 422 844 418 850 415 C858 410 866 408 875 406 L903 396.5 L916 399 L932 406 L978 423 L1013 428 L1021 433 L1052 428" fill="none" stroke="#fbe08a" stroke-width="1.6" stroke-linejoin="round" stroke-linecap="round"/>
<path d="M126 698 C132 706 140 716 150 724 C160 732 170 740 176 752 C180 762 190 768 200 775 C212 780 222 786 232 790" fill="none" stroke="#c9cfc0" stroke-width="1"/>
<path d="M200 782 C210 790 220 800 230 812 C240 822 248 834 254 846 C262 858 272 866 282 876 C292 886 300 896 310 902 C330 906 350 908 366 912 C374 920 376 934 378 948" fill="none" stroke="#c2c8ba" stroke-width="1"/>
<path d="M96 400 C100 430 104 450 112 470 C120 500 130 540 140 575 C136 600 126 620 116 640 C110 652 104 660 98 668" fill="none" stroke="#d6d4cc" stroke-width="1"/>
<path d="M37 655 C50 658 70 662 92 668" fill="none" stroke="#dcdad2" stroke-width="1"/>
<rect x="170" y="860" width="882" height="1" fill="#f4f6ee" opacity="0.75"/>
<rect x="152" y="640.4" width="23.6" height="10.6" fill="#4a80c4"/><text x="163.8" y="649.1" text-anchor="middle" font-size="9.4" font-weight="bold" fill="#fff" font-family="Liberation Sans, sans-serif">M56</text>
<rect x="94.6" y="764.4" width="23.6" height="10.6" fill="#4a80c4"/><text x="106.39999999999999" y="773.1" text-anchor="middle" font-size="9.4" font-weight="bold" fill="#fff" font-family="Liberation Sans, sans-serif">M56</text>
<rect x="299.3" y="614.2" width="23.6" height="10.6" fill="#4a80c4"/><text x="311.1" y="622.9000000000001" text-anchor="middle" font-size="9.4" font-weight="bold" fill="#fff" font-family="Liberation Sans, sans-serif">M56</text>
<rect x="444" y="663.8" width="23.6" height="10.6" fill="#4a80c4"/><text x="455.8" y="672.5" text-anchor="middle" font-size="9.4" font-weight="bold" fill="#fff" font-family="Liberation Sans, sans-serif">M56</text>
<rect x="721.4" y="593.2" width="23.6" height="10.6" fill="#4a80c4"/><text x="733.1999999999999" y="601.9000000000001" text-anchor="middle" font-size="9.4" font-weight="bold" fill="#fff" font-family="Liberation Sans, sans-serif">M56</text>
<rect x="885" y="388" width="23.6" height="10.6" fill="#4a80c4"/><text x="896.8" y="396.70000000000005" text-anchor="middle" font-size="9.4" font-weight="bold" fill="#fff" font-family="Liberation Sans, sans-serif">M56</text>
<rect x="1030.4" y="422.2" width="23.6" height="10.6" fill="#4a80c4"/><text x="1042.2" y="430.90000000000003" text-anchor="middle" font-size="9.4" font-weight="bold" fill="#fff" font-family="Liberation Sans, sans-serif">M56</text>
<polyline points="30.0,833.0 123.6,698.8 298.5,616.8 329.6,621.9 360.5,626.2 568.5,692.5 584.1,685.2 618.9,677.7 679.3,638.8 703.5,627.0 730.4,601.8 742.5,588.3 781.7,542.3 794.4,514.7 800.3,485.4 796.3,453.7 883.4,407.2 909.6,391.7 977.4,422.0 1013.0,429.6 1020.5,432.7" fill="none" stroke="#f6a93e" stroke-opacity="0.76" stroke-width="5.8" stroke-linejoin="round"/>
<text x="216" y="247" text-anchor="middle" font-size="11" fill="#424242" stroke="#fff" stroke-width="2.2" stroke-opacity="0.85" paint-order="stroke" stroke-linejoin="round" font-family="Liberation Sans, sans-serif">Балыктах</text>
<circle cx="216" cy="251.5" r="1.9" fill="#fff" stroke="#444" stroke-width="0.9"/>
<text x="330" y="316" text-anchor="middle" font-size="11" fill="#424242" stroke="#fff" stroke-width="2.2" stroke-opacity="0.85" paint-order="stroke" stroke-linejoin="round" font-family="Liberation Sans, sans-serif">Эселях</text>
<circle cx="330" cy="320" r="1.9" fill="#fff" stroke="#444" stroke-width="0.9"/>
<text x="58.5" y="318" text-anchor="middle" font-size="11" fill="#424242" stroke="#fff" stroke-width="2.2" stroke-opacity="0.85" paint-order="stroke" stroke-linejoin="round" font-family="Liberation Sans, sans-serif">Тумул</text>
<circle cx="58" cy="322.5" r="1.9" fill="#fff" stroke="#444" stroke-width="0.9"/>
<text x="78" y="383" text-anchor="middle" font-size="11" fill="#424242" stroke="#fff" stroke-width="2.2" stroke-opacity="0.85" paint-order="stroke" stroke-linejoin="round" font-family="Liberation Sans, sans-serif">Намцы</text>
<circle cx="78" cy="387.5" r="1.9" fill="#fff" stroke="#444" stroke-width="0.9"/>
<text x="351" y="410" text-anchor="middle" font-size="11" fill="#424242" stroke="#fff" stroke-width="2.2" stroke-opacity="0.85" paint-order="stroke" stroke-linejoin="round" font-family="Liberation Sans, sans-serif">Борогонцы</text>
<circle cx="352" cy="414.5" r="1.9" fill="#fff" stroke="#444" stroke-width="0.9"/>
<text x="100" y="466" text-anchor="middle" font-size="11" fill="#424242" stroke="#fff" stroke-width="2.2" stroke-opacity="0.85" paint-order="stroke" stroke-linejoin="round" font-family="Liberation Sans, sans-serif">Кысыл-Сыр</text>
<circle cx="99" cy="470.5" r="1.9" fill="#fff" stroke="#444" stroke-width="0.9"/>
<text x="139" y="538" text-anchor="middle" font-size="11" fill="#424242" stroke="#fff" stroke-width="2.2" stroke-opacity="0.85" paint-order="stroke" stroke-linejoin="round" font-family="Liberation Sans, sans-serif">Кангалассы</text>
<circle cx="140" cy="542" r="1.9" fill="#fff" stroke="#444" stroke-width="0.9"/>
<text x="113" y="612" text-anchor="middle" font-size="11" fill="#424242" stroke="#fff" stroke-width="2.2" stroke-opacity="0.85" paint-order="stroke" stroke-linejoin="round" font-family="Liberation Sans, sans-serif">Жатай</text>
<circle cx="113" cy="616" r="1.9" fill="#fff" stroke="#444" stroke-width="0.9"/>
<text x="100" y="629" text-anchor="middle" font-size="11" fill="#424242" stroke="#fff" stroke-width="2.2" stroke-opacity="0.85" paint-order="stroke" stroke-linejoin="round" font-family="Liberation Sans, sans-serif">Марха</text>
<circle cx="100" cy="633.5" r="1.9" fill="#fff" stroke="#444" stroke-width="0.9"/>
<text x="53.5" y="635" text-anchor="middle" font-size="11" fill="#424242" stroke="#fff" stroke-width="2.2" stroke-opacity="0.85" paint-order="stroke" stroke-linejoin="round" font-family="Liberation Sans, sans-serif">Маган</text>
<circle cx="54" cy="639.5" r="1.9" fill="#fff" stroke="#444" stroke-width="0.9"/>
<text x="92" y="662" text-anchor="middle" font-size="14.5" fill="#222" stroke="#fff" stroke-width="2.2" stroke-opacity="0.85" paint-order="stroke" stroke-linejoin="round" font-family="Liberation Sans, sans-serif">Якутск</text>
<circle cx="93" cy="668" r="2.6" fill="#fff" stroke="#333" stroke-width="1.2"/>
<text x="125" y="682" text-anchor="middle" font-size="11" fill="#424242" stroke="#fff" stroke-width="2.2" stroke-opacity="0.85" paint-order="stroke" stroke-linejoin="round" font-family="Liberation Sans, sans-serif">Нижний</text>
<text x="125" y="692" text-anchor="middle" font-size="11" fill="#424242" stroke="#fff" stroke-width="2.2" stroke-opacity="0.85" paint-order="stroke" stroke-linejoin="round" font-family="Liberation Sans, sans-serif">Бестях</text>
<circle cx="126" cy="696" r="1.9" fill="#fff" stroke="#444" stroke-width="0.9"/>
<text x="73.5" y="712.5" text-anchor="middle" font-size="12.5" fill="#424242" stroke="#fff" stroke-width="2.2" stroke-opacity="0.85" paint-order="stroke" stroke-linejoin="round" font-family="Liberation Sans, sans-serif">Хатассы</text>
<circle cx="74" cy="717.5" r="1.9" fill="#fff" stroke="#444" stroke-width="0.9"/>
<text x="283" y="602" text-anchor="middle" font-size="11" fill="#424242" stroke="#fff" stroke-width="2.2" stroke-opacity="0.85" paint-order="stroke" stroke-linejoin="round" font-family="Liberation Sans, sans-serif">Тюнгюлю</text>
<circle cx="274" cy="606" r="1.9" fill="#fff" stroke="#444" stroke-width="0.9"/>
<text x="313" y="704" text-anchor="middle" font-size="11" fill="#424242" stroke="#fff" stroke-width="2.2" stroke-opacity="0.85" paint-order="stroke" stroke-linejoin="round" font-family="Liberation Sans, sans-serif">Сымах</text>
<circle cx="313" cy="708.5" r="1.9" fill="#fff" stroke="#444" stroke-width="0.9"/>
<text x="200" y="779" text-anchor="middle" font-size="11" fill="#424242" stroke="#fff" stroke-width="2.2" stroke-opacity="0.85" paint-order="stroke" stroke-linejoin="round" font-family="Liberation Sans, sans-serif">Майя</text>
<circle cx="200" cy="783" r="1.9" fill="#fff" stroke="#444" stroke-width="0.9"/>
<text x="507" y="607" text-anchor="middle" font-size="11" fill="#424242" stroke="#fff" stroke-width="2.2" stroke-opacity="0.85" paint-order="stroke" stroke-linejoin="round" font-family="Liberation Sans, sans-serif">Беря</text>
<circle cx="507" cy="611" r="1.9" fill="#fff" stroke="#444" stroke-width="0.9"/>
<text x="584" y="679" text-anchor="middle" font-size="11" fill="#424242" stroke="#fff" stroke-width="2.2" stroke-opacity="0.85" paint-order="stroke" stroke-linejoin="round" font-family="Liberation Sans, sans-serif">Чурапча</text>
<text x="788" y="539" text-anchor="middle" font-size="11" fill="#424242" stroke="#fff" stroke-width="2.2" stroke-opacity="0.85" paint-order="stroke" stroke-linejoin="round" font-family="Liberation Sans, sans-serif">Ытык-Кюель</text>
<circle cx="788.5" cy="543" r="1.9" fill="#fff" stroke="#444" stroke-width="0.9"/>
<text x="979" y="584" text-anchor="middle" font-size="10.5" fill="#424242" stroke="#fff" stroke-width="2.2" stroke-opacity="0.85" paint-order="stroke" stroke-linejoin="round" font-family="Liberation Sans, sans-serif">Чымнайи</text>
<circle cx="979" cy="588" r="1.9" fill="#fff" stroke="#444" stroke-width="0.9"/>
<text x="377" y="920" text-anchor="middle" font-size="11" fill="#424242" stroke="#fff" stroke-width="2.2" stroke-opacity="0.85" paint-order="stroke" stroke-linejoin="round" font-family="Liberation Sans, sans-serif">Эмиссы</text>
<circle cx="377" cy="924.5" r="1.9" fill="#fff" stroke="#444" stroke-width="0.9"/>
<text x="39" y="805" text-anchor="middle" font-size="11" fill="#424242" stroke="#fff" stroke-width="2.2" stroke-opacity="0.85" paint-order="stroke" stroke-linejoin="round" font-family="Liberation Sans, sans-serif">Намцы</text>
<text x="105" y="349" text-anchor="middle" font-size="11" font-style="italic" fill="#4f74b8" stroke="#e8f0fb" stroke-width="1.6" stroke-opacity="0.7" paint-order="stroke" transform="rotate(-78 105 349)" font-family="Liberation Sans, sans-serif">р. Лена</text>
<text x="831" y="238" text-anchor="middle" font-size="11" font-style="italic" fill="#4f74b8" stroke="#e8f0fb" stroke-width="1.6" stroke-opacity="0.7" paint-order="stroke" transform="rotate(-10 831 238)" font-family="Liberation Sans, sans-serif">р. Алдан</text>
<text x="933" y="661" text-anchor="middle" font-size="10.5" font-style="italic" fill="#4f74b8" stroke="#e8f0fb" stroke-width="1.6" stroke-opacity="0.7" paint-order="stroke" transform="rotate(-39 933 661)" font-family="Liberation Sans, sans-serif">р. Амга</text>
<text x="669" y="917" text-anchor="middle" font-size="10.5" font-style="italic" fill="#4f74b8" stroke="#e8f0fb" stroke-width="1.6" stroke-opacity="0.7" paint-order="stroke" transform="rotate(-66 669 917)" font-family="Liberation Sans, sans-serif">р. Амга</text>
<path d="M904.7 374.7 Q908.2 382.0 909.6 391.7 Q911.0 382.0 914.5 374.7 Z" fill="#f28e2b" stroke="#4a2a08" stroke-width="0.7"/><circle cx="909.6" cy="366.5" r="10" fill="#080808"/><rect x="908.2" y="359.8" width="4.8" height="8.2" rx="2.3" fill="#eceef1"/><rect x="909.3" y="361.2" width="2.5" height="5.2" rx="1.1" fill="#8f969e"/><path d="M907.7 369.4 V371.4 A1.6 1.6 0 0 0 910.9 371.4 V369.4" fill="#3a3a3a" stroke="#f2f3f5" stroke-width="1.2"/>
<path d="M878.5 390.2 Q882.0 397.5 883.4 407.2 Q884.8 397.5 888.3 390.2 Z" fill="#f28e2b" stroke="#4a2a08" stroke-width="0.7"/><circle cx="883.4" cy="382.0" r="10" fill="#080808"/><rect x="882.0" y="375.3" width="4.8" height="8.2" rx="2.3" fill="#eceef1"/><rect x="883.1" y="376.7" width="2.5" height="5.2" rx="1.1" fill="#8f969e"/><path d="M881.5 384.9 V386.9 A1.6 1.6 0 0 0 884.7 386.9 V384.9" fill="#3a3a3a" stroke="#f2f3f5" stroke-width="1.2"/>
<path d="M972.5 405.0 Q976.0 412.3 977.4 422.0 Q978.8 412.3 982.3 405.0 Z" fill="#f28e2b" stroke="#4a2a08" stroke-width="0.7"/><circle cx="977.4" cy="396.8" r="10" fill="#080808"/><rect x="976.0" y="390.1" width="4.8" height="8.2" rx="2.3" fill="#eceef1"/><rect x="977.1" y="391.5" width="2.5" height="5.2" rx="1.1" fill="#8f969e"/><path d="M975.5 399.7 V401.7 A1.6 1.6 0 0 0 978.7 401.7 V399.7" fill="#3a3a3a" stroke="#f2f3f5" stroke-width="1.2"/>
<path d="M1008.1 412.6 Q1011.6 419.9 1013.0 429.6 Q1014.4 419.9 1017.9 412.6 Z" fill="#f28e2b" stroke="#4a2a08" stroke-width="0.7"/><circle cx="1013.0" cy="404.4" r="10" fill="#080808"/><rect x="1011.6" y="397.7" width="4.8" height="8.2" rx="2.3" fill="#eceef1"/><rect x="1012.7" y="399.1" width="2.5" height="5.2" rx="1.1" fill="#8f969e"/><path d="M1011.1 407.3 V409.3 A1.6 1.6 0 0 0 1014.3 409.3 V407.3" fill="#3a3a3a" stroke="#f2f3f5" stroke-width="1.2"/>
<path d="M1015.6 415.7 Q1019.1 423.0 1020.5 432.7 Q1021.9 423.0 1025.4 415.7 Z" fill="#f28e2b" stroke="#4a2a08" stroke-width="0.7"/><circle cx="1020.5" cy="407.5" r="10" fill="#080808"/><rect x="1019.1" y="400.8" width="4.8" height="8.2" rx="2.3" fill="#eceef1"/><rect x="1020.2" y="402.2" width="2.5" height="5.2" rx="1.1" fill="#8f969e"/><path d="M1018.6 410.4 V412.4 A1.6 1.6 0 0 0 1021.8 412.4 V410.4" fill="#3a3a3a" stroke="#f2f3f5" stroke-width="1.2"/>
<path d="M791.4 436.7 Q794.9 444.0 796.3 453.7 Q797.7 444.0 801.2 436.7 Z" fill="#f28e2b" stroke="#4a2a08" stroke-width="0.7"/><circle cx="796.3" cy="428.5" r="10" fill="#080808"/><rect x="794.9" y="421.8" width="4.8" height="8.2" rx="2.3" fill="#eceef1"/><rect x="796.0" y="423.2" width="2.5" height="5.2" rx="1.1" fill="#8f969e"/><path d="M794.4 431.4 V433.4 A1.6 1.6 0 0 0 797.6 433.4 V431.4" fill="#3a3a3a" stroke="#f2f3f5" stroke-width="1.2"/>
<path d="M795.4 468.4 Q798.9 475.7 800.3 485.4 Q801.7 475.7 805.2 468.4 Z" fill="#f28e2b" stroke="#4a2a08" stroke-width="0.7"/><circle cx="800.3" cy="460.2" r="10" fill="#080808"/><rect x="798.9" y="453.5" width="4.8" height="8.2" rx="2.3" fill="#eceef1"/><rect x="800.0" y="454.9" width="2.5" height="5.2" rx="1.1" fill="#8f969e"/><path d="M798.4 463.1 V465.1 A1.6 1.6 0 0 0 801.6 465.1 V463.1" fill="#3a3a3a" stroke="#f2f3f5" stroke-width="1.2"/>
<path d="M789.5 497.7 Q793.0 505.0 794.4 514.7 Q795.8 505.0 799.3 497.7 Z" fill="#f28e2b" stroke="#4a2a08" stroke-width="0.7"/><circle cx="794.4" cy="489.5" r="10" fill="#080808"/><rect x="793.0" y="482.8" width="4.8" height="8.2" rx="2.3" fill="#eceef1"/><rect x="794.1" y="484.2" width="2.5" height="5.2" rx="1.1" fill="#8f969e"/><path d="M792.5 492.4 V494.4 A1.6 1.6 0 0 0 795.7 494.4 V492.4" fill="#3a3a3a" stroke="#f2f3f5" stroke-width="1.2"/>
<path d="M776.8 525.3 Q780.3 532.6 781.7 542.3 Q783.1 532.6 786.6 525.3 Z" fill="#f28e2b" stroke="#4a2a08" stroke-width="0.7"/><circle cx="781.7" cy="517.1" r="10" fill="#080808"/><rect x="780.3" y="510.4" width="4.8" height="8.2" rx="2.3" fill="#eceef1"/><rect x="781.4" y="511.8" width="2.5" height="5.2" rx="1.1" fill="#8f969e"/><path d="M779.8 520.0 V522.0 A1.6 1.6 0 0 0 783.0 522.0 V520.0" fill="#3a3a3a" stroke="#f2f3f5" stroke-width="1.2"/>
<path d="M737.6 571.3 Q741.1 578.6 742.5 588.3 Q743.9 578.6 747.4 571.3 Z" fill="#f28e2b" stroke="#4a2a08" stroke-width="0.7"/><circle cx="742.5" cy="563.1" r="10" fill="#080808"/><rect x="741.1" y="556.4" width="4.8" height="8.2" rx="2.3" fill="#eceef1"/><rect x="742.2" y="557.8" width="2.5" height="5.2" rx="1.1" fill="#8f969e"/><path d="M740.6 566.0 V568.0 A1.6 1.6 0 0 0 743.8 568.0 V566.0" fill="#3a3a3a" stroke="#f2f3f5" stroke-width="1.2"/>
<path d="M725.5 584.8 Q729.0 592.1 730.4 601.8 Q731.8 592.1 735.3 584.8 Z" fill="#f28e2b" stroke="#4a2a08" stroke-width="0.7"/><circle cx="730.4" cy="576.6" r="10" fill="#080808"/><rect x="729.0" y="569.9" width="4.8" height="8.2" rx="2.3" fill="#eceef1"/><rect x="730.1" y="571.3" width="2.5" height="5.2" rx="1.1" fill="#8f969e"/><path d="M728.5 579.5 V581.5 A1.6 1.6 0 0 0 731.7 581.5 V579.5" fill="#3a3a3a" stroke="#f2f3f5" stroke-width="1.2"/>
<path d="M293.6 599.8 Q297.1 607.1 298.5 616.8 Q299.9 607.1 303.4 599.8 Z" fill="#f28e2b" stroke="#4a2a08" stroke-width="0.7"/><circle cx="298.5" cy="591.6" r="10" fill="#080808"/><rect x="297.1" y="584.9" width="4.8" height="8.2" rx="2.3" fill="#eceef1"/><rect x="298.2" y="586.3" width="2.5" height="5.2" rx="1.1" fill="#8f969e"/><path d="M296.6 594.5 V596.5 A1.6 1.6 0 0 0 299.8 596.5 V594.5" fill="#3a3a3a" stroke="#f2f3f5" stroke-width="1.2"/>
<path d="M324.7 604.9 Q328.2 612.2 329.6 621.9 Q331.0 612.2 334.5 604.9 Z" fill="#f28e2b" stroke="#4a2a08" stroke-width="0.7"/><circle cx="329.6" cy="596.7" r="10" fill="#080808"/><rect x="328.2" y="590.0" width="4.8" height="8.2" rx="2.3" fill="#eceef1"/><rect x="329.3" y="591.4" width="2.5" height="5.2" rx="1.1" fill="#8f969e"/><path d="M327.7 599.6 V601.6 A1.6 1.6 0 0 0 330.9 601.6 V599.6" fill="#3a3a3a" stroke="#f2f3f5" stroke-width="1.2"/>
<path d="M355.6 609.2 Q359.1 616.5 360.5 626.2 Q361.9 616.5 365.4 609.2 Z" fill="#f28e2b" stroke="#4a2a08" stroke-width="0.7"/><circle cx="360.5" cy="601.0" r="10" fill="#080808"/><rect x="359.1" y="594.3" width="4.8" height="8.2" rx="2.3" fill="#eceef1"/><rect x="360.2" y="595.7" width="2.5" height="5.2" rx="1.1" fill="#8f969e"/><path d="M358.6 603.9 V605.9 A1.6 1.6 0 0 0 361.8 605.9 V603.9" fill="#3a3a3a" stroke="#f2f3f5" stroke-width="1.2"/>
<path d="M698.6 610.0 Q702.1 617.3 703.5 627.0 Q704.9 617.3 708.4 610.0 Z" fill="#f28e2b" stroke="#4a2a08" stroke-width="0.7"/><circle cx="703.5" cy="601.8" r="10" fill="#080808"/><rect x="702.1" y="595.1" width="4.8" height="8.2" rx="2.3" fill="#eceef1"/><rect x="703.2" y="596.5" width="2.5" height="5.2" rx="1.1" fill="#8f969e"/><path d="M701.6 604.7 V606.7 A1.6 1.6 0 0 0 704.8 606.7 V604.7" fill="#3a3a3a" stroke="#f2f3f5" stroke-width="1.2"/>
<path d="M674.4 621.8 Q677.9 629.1 679.3 638.8 Q680.7 629.1 684.2 621.8 Z" fill="#f28e2b" stroke="#4a2a08" stroke-width="0.7"/><circle cx="679.3" cy="613.6" r="10" fill="#080808"/><rect x="677.9" y="606.9" width="4.8" height="8.2" rx="2.3" fill="#eceef1"/><rect x="679.0" y="608.3" width="2.5" height="5.2" rx="1.1" fill="#8f969e"/><path d="M677.4 616.5 V618.5 A1.6 1.6 0 0 0 680.6 618.5 V616.5" fill="#3a3a3a" stroke="#f2f3f5" stroke-width="1.2"/>
<path d="M614.0 660.7 Q617.5 668.0 618.9 677.7 Q620.3 668.0 623.8 660.7 Z" fill="#f28e2b" stroke="#4a2a08" stroke-width="0.7"/><circle cx="618.9" cy="652.5" r="10" fill="#080808"/><rect x="617.5" y="645.8" width="4.8" height="8.2" rx="2.3" fill="#eceef1"/><rect x="618.6" y="647.2" width="2.5" height="5.2" rx="1.1" fill="#8f969e"/><path d="M617.0 655.4 V657.4 A1.6 1.6 0 0 0 620.2 657.4 V655.4" fill="#3a3a3a" stroke="#f2f3f5" stroke-width="1.2"/>
<path d="M579.2 668.2 Q582.7 675.5 584.1 685.2 Q585.5 675.5 589.0 668.2 Z" fill="#f28e2b" stroke="#4a2a08" stroke-width="0.7"/><circle cx="584.1" cy="660.0" r="10" fill="#080808"/><rect x="582.7" y="653.3" width="4.8" height="8.2" rx="2.3" fill="#eceef1"/><rect x="583.8" y="654.7" width="2.5" height="5.2" rx="1.1" fill="#8f969e"/><path d="M582.2 662.9 V664.9 A1.6 1.6 0 0 0 585.4 664.9 V662.9" fill="#3a3a3a" stroke="#f2f3f5" stroke-width="1.2"/>
<path d="M563.6 675.5 Q567.1 682.8 568.5 692.5 Q569.9 682.8 573.4 675.5 Z" fill="#f28e2b" stroke="#4a2a08" stroke-width="0.7"/><circle cx="568.5" cy="667.3" r="10" fill="#080808"/><rect x="567.1" y="660.6" width="4.8" height="8.2" rx="2.3" fill="#eceef1"/><rect x="568.2" y="662.0" width="2.5" height="5.2" rx="1.1" fill="#8f969e"/><path d="M566.6 670.2 V672.2 A1.6 1.6 0 0 0 569.8 672.2 V670.2" fill="#3a3a3a" stroke="#f2f3f5" stroke-width="1.2"/>
<path d="M118.7 681.8 Q122.2 689.1 123.6 698.8 Q125.0 689.1 128.5 681.8 Z" fill="#f28e2b" stroke="#4a2a08" stroke-width="0.7"/><circle cx="123.6" cy="673.6" r="10" fill="#080808"/><rect x="122.2" y="666.9" width="4.8" height="8.2" rx="2.3" fill="#eceef1"/><rect x="123.3" y="668.3" width="2.5" height="5.2" rx="1.1" fill="#8f969e"/><path d="M121.7 676.5 V678.5 A1.6 1.6 0 0 0 124.9 678.5 V676.5" fill="#3a3a3a" stroke="#f2f3f5" stroke-width="1.2"/>
<rect x="896.4" y="370.0" width="26.4" height="12.3" rx="6.15" fill="#f4b676" fill-opacity="0.9" stroke="#24170a" stroke-width="1.1"/><text x="909.7" y="379.9" text-anchor="middle" font-size="10.2" fill="#2c1c0c" font-family="Liberation Sans, sans-serif">41</text>
<rect x="990.4" y="384.8" width="26.4" height="12.3" rx="6.15" fill="#f4b676" fill-opacity="0.9" stroke="#24170a" stroke-width="1.1"/><text x="1003.7" y="394.7" text-anchor="middle" font-size="10.2" fill="#2c1c0c" font-family="Liberation Sans, sans-serif">45</text>
<rect x="1026.0" y="392.4" width="26.4" height="12.3" rx="6.15" fill="#f4b676" fill-opacity="0.9" stroke="#24170a" stroke-width="1.1"/>
<rect x="1033.5" y="395.5" width="26.4" height="12.3" rx="6.15" fill="#f4b676" fill-opacity="0.9" stroke="#24170a" stroke-width="1.1"/><text x="1046.8" y="405.4" text-anchor="middle" font-size="10.2" fill="#2c1c0c" font-family="Liberation Sans, sans-serif">47</text>
<rect x="809.3" y="416.5" width="26.4" height="12.3" rx="6.15" fill="#f4b676" fill-opacity="0.9" stroke="#24170a" stroke-width="1.1"/><text x="822.6" y="426.4" text-anchor="middle" font-size="10.2" fill="#2c1c0c" font-family="Liberation Sans, sans-serif">40</text>
<rect x="813.3" y="448.2" width="26.4" height="12.3" rx="6.15" fill="#f4b676" fill-opacity="0.9" stroke="#24170a" stroke-width="1.1"/><text x="826.6" y="458.1" text-anchor="middle" font-size="10.2" fill="#2c1c0c" font-family="Liberation Sans, sans-serif">39</text>
<rect x="807.4" y="477.5" width="26.4" height="12.3" rx="6.15" fill="#f4b676" fill-opacity="0.9" stroke="#24170a" stroke-width="1.1"/><text x="820.7" y="487.4" text-anchor="middle" font-size="10.2" fill="#2c1c0c" font-family="Liberation Sans, sans-serif">38</text>
<rect x="794.7" y="505.1" width="26.4" height="12.3" rx="6.15" fill="#f4b676" fill-opacity="0.9" stroke="#24170a" stroke-width="1.1"/><text x="808.0" y="515.0" text-anchor="middle" font-size="10.2" fill="#2c1c0c" font-family="Liberation Sans, sans-serif">37</text>
<rect x="755.5" y="551.1" width="26.4" height="12.3" rx="6.15" fill="#f4b676" fill-opacity="0.9" stroke="#24170a" stroke-width="1.1"/><text x="768.8" y="561.0" text-anchor="middle" font-size="10.2" fill="#2c1c0c" font-family="Liberation Sans, sans-serif">36</text>
<rect x="743.4" y="564.6" width="26.4" height="12.3" rx="6.15" fill="#f4b676" fill-opacity="0.9" stroke="#24170a" stroke-width="1.1"/><text x="756.7" y="574.5" text-anchor="middle" font-size="10.2" fill="#2c1c0c" font-family="Liberation Sans, sans-serif">35</text>
<rect x="311.5" y="579.6" width="26.4" height="12.3" rx="6.15" fill="#f4b676" fill-opacity="0.9" stroke="#24170a" stroke-width="1.1"/><text x="324.8" y="589.5" text-anchor="middle" font-size="10.2" fill="#2c1c0c" font-family="Liberation Sans, sans-serif">27</text>
<rect x="342.6" y="584.7" width="26.4" height="12.3" rx="6.15" fill="#f4b676" fill-opacity="0.9" stroke="#24170a" stroke-width="1.1"/><text x="355.9" y="594.6" text-anchor="middle" font-size="10.2" fill="#2c1c0c" font-family="Liberation Sans, sans-serif">28</text>
<rect x="373.5" y="589.0" width="26.4" height="12.3" rx="6.15" fill="#f4b676" fill-opacity="0.9" stroke="#24170a" stroke-width="1.1"/><text x="386.8" y="598.9" text-anchor="middle" font-size="10.2" fill="#2c1c0c" font-family="Liberation Sans, sans-serif">29</text>
<rect x="716.5" y="589.8" width="26.4" height="12.3" rx="6.15" fill="#f4b676" fill-opacity="0.9" stroke="#24170a" stroke-width="1.1"/><text x="729.8" y="599.7" text-anchor="middle" font-size="10.2" fill="#2c1c0c" font-family="Liberation Sans, sans-serif">34</text>
<rect x="692.3" y="601.6" width="26.4" height="12.3" rx="6.15" fill="#f4b676" fill-opacity="0.9" stroke="#24170a" stroke-width="1.1"/><text x="705.6" y="611.5" text-anchor="middle" font-size="10.2" fill="#2c1c0c" font-family="Liberation Sans, sans-serif">33</text>
<rect x="631.9" y="640.5" width="26.4" height="12.3" rx="6.15" fill="#f4b676" fill-opacity="0.9" stroke="#24170a" stroke-width="1.1"/><text x="645.2" y="650.4" text-anchor="middle" font-size="10.2" fill="#2c1c0c" font-family="Liberation Sans, sans-serif">32</text>
<rect x="597.1" y="648.0" width="26.4" height="12.3" rx="6.15" fill="#f4b676" fill-opacity="0.9" stroke="#24170a" stroke-width="1.1"/><text x="610.4" y="657.9" text-anchor="middle" font-size="10.2" fill="#2c1c0c" font-family="Liberation Sans, sans-serif">31</text>
<rect x="581.5" y="655.3" width="26.4" height="12.3" rx="6.15" fill="#f4b676" fill-opacity="0.9" stroke="#24170a" stroke-width="1.1"/><text x="594.8" y="665.2" text-anchor="middle" font-size="10.2" fill="#2c1c0c" font-family="Liberation Sans, sans-serif">30</text>
<rect x="136.6" y="661.6" width="26.4" height="12.3" rx="6.15" fill="#f4b676" fill-opacity="0.9" stroke="#24170a" stroke-width="1.1"/><text x="149.9" y="671.5" text-anchor="middle" font-size="10.2" fill="#2c1c0c" font-family="Liberation Sans, sans-serif">26</text>
</svg>
<!-- pan control -->
<div class="abs" style="left:19px;top:19px;width:50px;height:50px;border-radius:50%;background:#fff;box-shadow:0 1px 3px rgba(0,0,0,.35);border:1px solid #d8d8d8;box-sizing:border-box;"></div>
<svg class="abs" style="left:19px;top:19px" width="50" height="50" viewBox="0 0 50 50"><g fill="none" stroke="#777" stroke-width="2.4"><path d="M19.2 12.4 L25 7 L30.8 12.4"/><path d="M19.2 37.6 L25 43 L30.8 37.6"/><path d="M12.4 19.2 L7 25 L12.4 30.8"/><path d="M37.6 19.2 L43 25 L37.6 30.8"/></g></svg>
<!-- pegman -->
<div class="abs" style="left:36px;top:92px;width:16px;height:33px;background:#fff;border-radius:2px;box-shadow:0 1px 3px rgba(0,0,0,.35);"></div>
<svg class="abs" style="left:36px;top:92px" width="16" height="33" viewBox="0 0 16 33"><circle cx="8" cy="7.4" r="3.9" fill="#f8b62c" stroke="#c98a14" stroke-width="0.7"/><path d="M2.4 12.8 C2.4 11.2 3.4 10.6 5 10.6 H11 C12.6 10.6 13.6 11.2 13.6 12.8 V20.4 H11.2 V29.6 H4.8 V20.4 H2.4 Z" fill="#f8b32a" stroke="#c98a14" stroke-width="0.7" stroke-linejoin="round"/><path d="M5.4 10.6 L8 14.6 L10.6 10.6 Z" fill="#e4582e"/><path d="M4.8 14.4 V20.4 M11.2 14.4 V20.4" stroke="#d9961a" stroke-width="0.6"/></svg>
<!-- zoom slider -->
<div class="abs" style="left:42px;top:154px;width:4px;height:190px;background:#fff;border-left:1px solid #d0d0d0;border-right:1px solid #d0d0d0;box-sizing:border-box;"></div>
<div class="abs" style="left:36px;top:138px;width:16px;height:16px;background:#fff;border-radius:2px;box-shadow:0 1px 3px rgba(0,0,0,.35);"></div>
<div class="abs" style="left:36px;top:334px;width:16px;height:16px;background:#fff;border-radius:2px;box-shadow:0 1px 3px rgba(0,0,0,.35);"></div>
<div class="abs" style="left:36px;top:258px;width:16px;height:9px;background:#fff;border-radius:2px;box-shadow:0 1px 2px rgba(0,0,0,.4);"></div>
<svg class="abs" style="left:36px;top:138px" width="16" height="212" viewBox="0 0 16 212"><path d="M4.5 8 H11.5 M8 4.5 V11.5" stroke="#666" stroke-width="1.8"/><path d="M4.5 204 H11.5" stroke="#666" stroke-width="1.8"/><path d="M5 124 H11" stroke="#999" stroke-width="1.2"/></svg>
<!-- map type -->
<div class="abs" style="left:1080px;top:5px;width:47px;height:17px;background:#fff;border:1px solid #c3c3c3;box-sizing:border-box;box-shadow:0 1px 3px rgba(0,0,0,.3);font:bold 11px/15px 'Liberation Sans',sans-serif;color:#000;text-align:center;">Карта</div>
<div class="abs" style="left:1126px;top:5px;width:58px;height:17px;background:#fff;border:1px solid #c3c3c3;box-sizing:border-box;box-shadow:0 1px 3px rgba(0,0,0,.3);font:11px/15px 'Liberation Sans',sans-serif;color:#666;text-align:center;">Спутник</div>
<!-- google logo -->
<div class="abs" style="left:7px;top:742.5px;font:20.6px/28px 'Liberation Serif',serif;color:#fff;letter-spacing:-0.55px;text-shadow:0 0 2px rgba(90,110,80,.9),1px 1px 2px rgba(70,90,60,.8);">Google</div>
<!-- attribution -->
<div class="abs" style="left:700px;top:759px;width:489px;height:13px;background:rgba(245,245,242,.82);"></div>
<div class="abs" style="left:706px;top:759px;height:13px;font:10px/14px 'Liberation Sans',sans-serif;color:#444;white-space:nowrap;" id="at1">Картографические данные © 2015 Google</div>
<div class="abs" style="left:908px;top:759px;width:1px;height:13px;background:#d8d8d4;"></div>
<div class="abs" style="left:914.5px;top:759px;height:13px;font:10px/14px 'Liberation Sans',sans-serif;color:#444;white-space:nowrap;letter-spacing:0.17px;" id="at2">Условия использования</div>
<div class="abs" style="left:1035.5px;top:759px;width:1px;height:13px;background:#d8d8d4;"></div>
<div class="abs" style="left:1040.6px;top:759px;height:13px;font:10px/14px 'Liberation Sans',sans-serif;color:#444;white-space:nowrap;" id="at3">Сообщить об ошибке на карте</div>

</div>
<div id="iw" class="abs" style="left:871px;top:210px;width:300px;height:161px;background:#fff;border-radius:2px;box-shadow:0 1px 4px rgba(0,0,0,.35);"></div>
<svg class="abs" style="left:1005px;top:370px" width="32" height="24" viewBox="1005 370 32 24"><path d="M1011.5 370 L1020.8 391 L1030.5 370 Z" fill="#fff"/><path d="M1011.5 371 L1020.8 391 L1030.5 371" fill="none" stroke="rgba(0,0,0,.18)" stroke-width="1"/></svg>
<div class="abs" style="left:885px;top:226px;width:246px;height:22px;background:#f0e6a6;"></div>
<div class="abs iwt" style="left:888px;top:229px;font:bold 10.6px/14px 'DejaVu Sans','Liberation Sans',sans-serif;color:#111;letter-spacing:-0.25px;">Moscow-Magadan</div>
<svg class="abs" style="left:1148px;top:221px" width="10" height="10" viewBox="0 0 10 10"><path d="M1 1 L9 9 M9 1 L1 9" stroke="#8a8a8a" stroke-width="1.6"/></svg>
<div class="abs iwl" style="top:260px;">ESN :</div><div class="abs iwv" style="top:260px;">0-2438123</div>
<div class="abs iwl" style="top:277px;">Type :</div><div class="abs iwv" style="top:277px;letter-spacing:0.42px;">UNLIMITED-TRACK</div>
<div class="abs iwl" style="top:294px;">Latitude :</div><div class="abs iwv" style="top:294px;">62.63077</div>
<div class="abs iwl" style="top:311px;">Longitude :</div><div class="abs iwv" style="top:311px;">134.82845</div>
<div class="abs iwl" style="top:328px;">Time :</div><div class="abs iwv" style="top:328px;">19.06.2015, 8:18:09</div>
<div class="abs iwl" style="top:345px;">Battery State :</div><div class="abs iwv" style="top:345px;">GOOD</div>

<div id="cbar" class="abs"><span>Copyrights</span></div>
<div id="cbtn" class="abs"></div>
<svg class="abs" style="left:1209px;top:961px" width="14" height="14" viewBox="0 0 14 14"><path d="M3.6 3.2 L7 6.6 L10.4 3.2 M3.6 7.2 L7 10.6 L10.4 7.2" fill="none" stroke="#111" stroke-width="1.5"/></svg>
<div id="cpanel" class="abs"></div>
<div id="ctext" class="abs">© 2011 Spot LLC. All rights reserved. All SPOT products described on this website are the products of Spot LLC, which is not affiliated in any manner with Spot Image of Toulouse, France or Spot Image Corporation of<br>Chantilly, Virginia.</div>
<div id="cbot" class="abs"></div><div id="cbot2" class="abs"></div>
</body>
</html>
